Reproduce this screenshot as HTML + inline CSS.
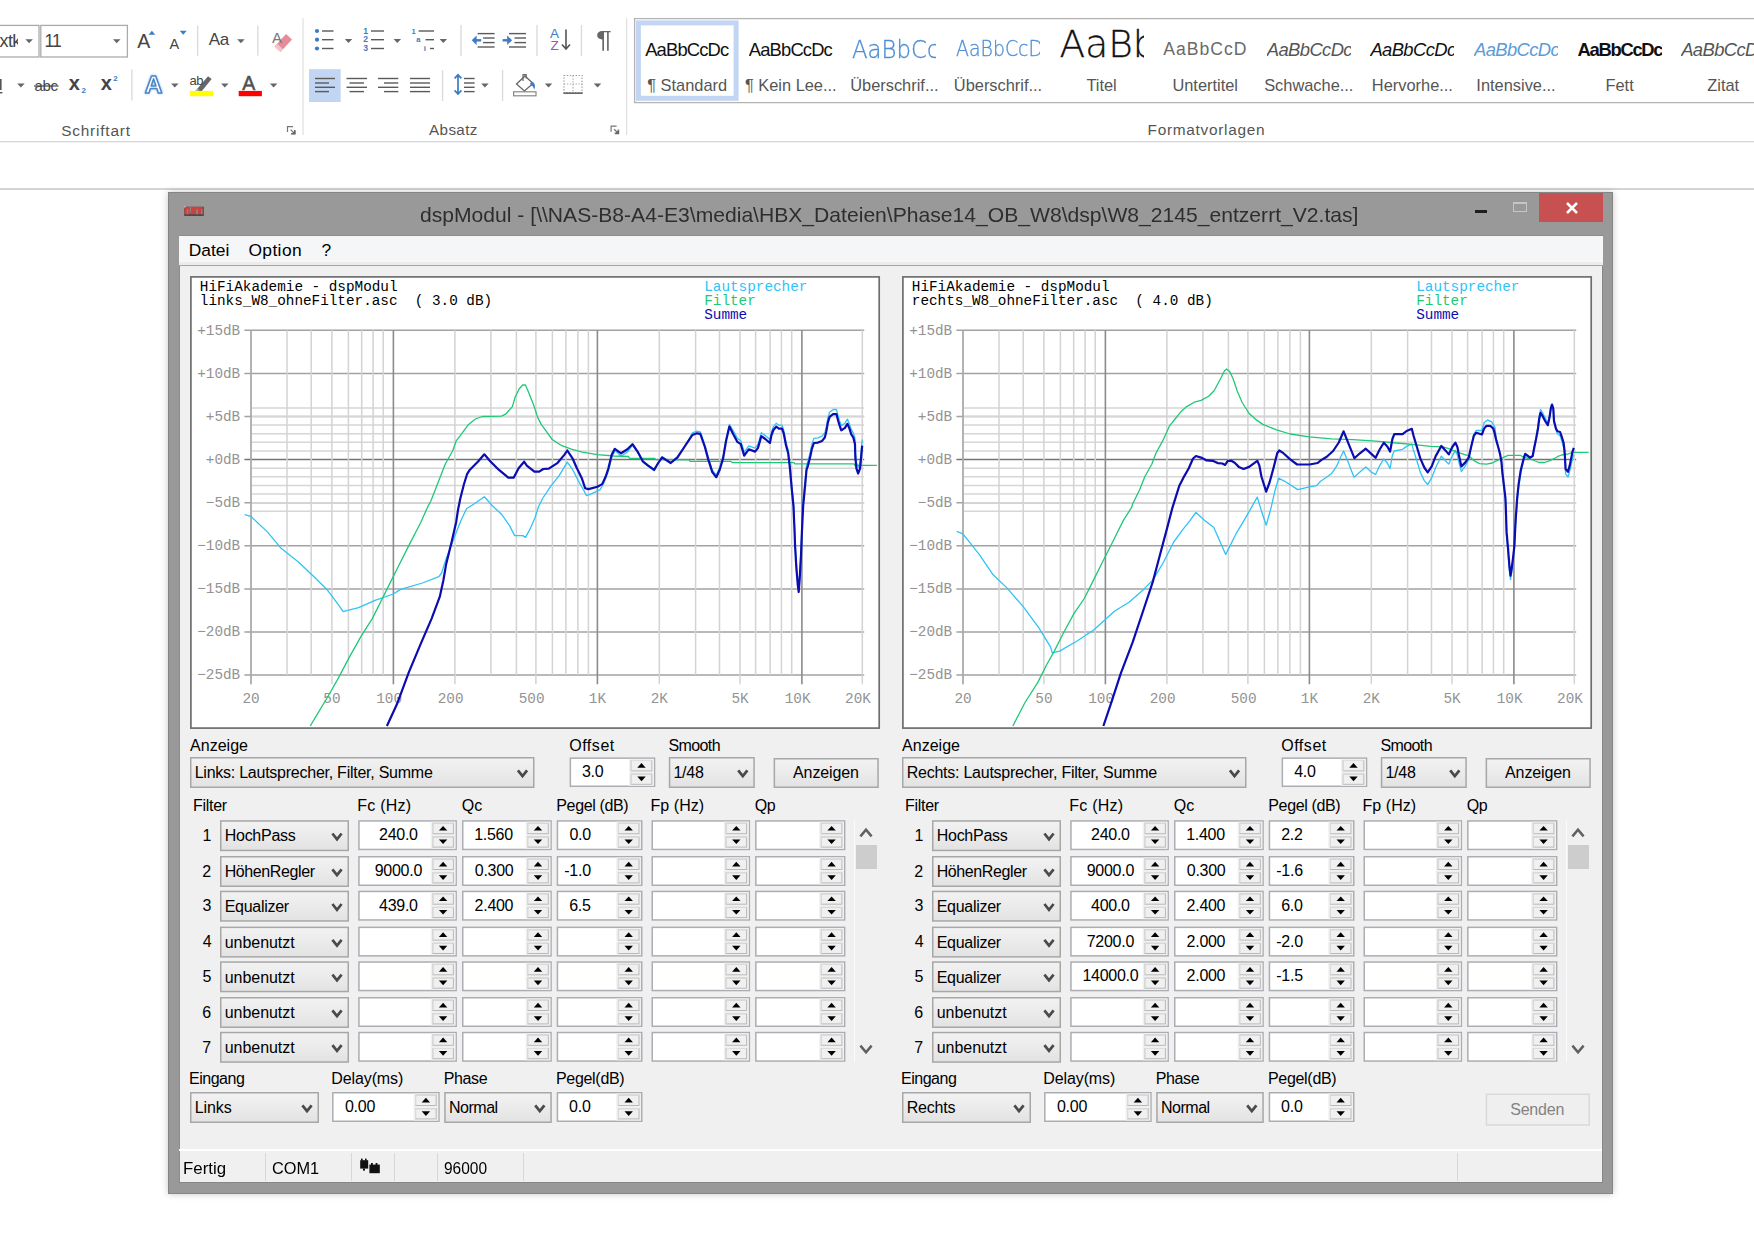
<!DOCTYPE html><html lang="de"><head><meta charset="utf-8"><title>dspModul</title><style>
html,body{margin:0;padding:0;background:#fff;}
body{width:1754px;height:1240px;overflow:hidden;position:relative;font-family:"Liberation Sans",sans-serif;}
.t{position:absolute;white-space:nowrap;line-height:1;display:block;}
</style></head><body><svg style="position:absolute;left:0;top:0" width="1754" height="150" viewBox="0 0 1754 150"><rect x="-5" y="25.4" width="44" height="31.6" fill="#fff" stroke="#ababab" stroke-width="1.3"/><rect x="40.8" y="25.4" width="86.6" height="31.6" fill="#fff" stroke="#ababab" stroke-width="1.3"/><path d="M25.4 39.2 h7.5 l-3.8 4.0 z" fill="#666"/><path d="M113.0 39.2 h7.5 l-3.8 4.0 z" fill="#666"/><path d="M148.6 34.8 h6.6 l-3.3 -4 z" fill="#3d7bc4"/><path d="M179.7 30.8 h7 l-3.5 4 z" fill="#3d7bc4"/><rect x="197.0" y="25.5" width="1.3" height="30.2" fill="#dadada"/><path d="M237.2 39.2 h7.5 l-3.8 4.0 z" fill="#666"/><rect x="257.2" y="25.5" width="1.3" height="30.2" fill="#dadada"/><path d="M274.5 46.5 l11.5 -12.5 l6 5.5 l-11.5 12.5 z" fill="#e58c9a"/><path d="M274.5 46.5 l2.6 -2.8 l6 5.5 l-2.6 2.8 z" fill="#f4c4cb"/><rect x="302.4" y="18.2" width="1.3" height="116.8" fill="#e1e1e1"/><rect x="-1" y="79" width="2.6" height="11" fill="#555"/><rect x="-1" y="92" width="3.4" height="1.4" fill="#555"/><path d="M17.2 83.6 h7.5 l-3.8 4.0 z" fill="#666"/><rect x="34.0" y="85.35" width="24.6" height="1.3" fill="#555"/><rect x="131.2" y="69.3" width="1.3" height="31.1" fill="#dadada"/><text x="153.6" y="93" text-anchor="middle" font-family="Liberation Sans, sans-serif" font-weight="bold" font-size="24.5" fill="#fff" stroke="#4a86c8" stroke-width="1.5" stroke-linejoin="round" style="filter:drop-shadow(0 0 1.2px #8db6e6)">A</text><path d="M171.1 83.6 h7.5 l-3.8 4.0 z" fill="#666"/><path d="M196.5 89.8 l11.5 -13.5 l3.6 2.6 l-10.5 13 z" fill="#666"/><path d="M195 91 l3 -2.5 l2 1.8 z" fill="#999"/><rect x="189.8" y="90.9" width="23.2" height="5.3" fill="#ffff00"/><path d="M221.1 83.6 h7.5 l-3.8 4.0 z" fill="#666"/><rect x="238.7" y="90.9" width="23.2" height="5.3" fill="#ff0000"/><path d="M269.9 83.6 h7.5 l-3.8 4.0 z" fill="#666"/><path d="M293.0 126.6 h-5.5 v5.5" fill="none" stroke="#777" stroke-width="1.2"/><path d="M290.6 129.6 l4 4 m0 -3.6 v3.6 h-3.6" fill="none" stroke="#777" stroke-width="1.3"/><path d="M295.6 134.6 h-4.6 l4.6 -4.6 z" fill="#666"/><circle cx="317" cy="31.0" r="2.1" fill="#3d7bc4"/><rect x="322.0" y="30.30" width="11.5" height="1.4" fill="#5a5a5a"/><circle cx="317" cy="39.7" r="2.1" fill="#3d7bc4"/><rect x="322.0" y="39.00" width="11.5" height="1.4" fill="#5a5a5a"/><circle cx="317" cy="48.5" r="2.1" fill="#3d7bc4"/><rect x="322.0" y="47.80" width="11.5" height="1.4" fill="#5a5a5a"/><path d="M344.8 38.9 h7.5 l-3.8 4.0 z" fill="#666"/><rect x="371.0" y="30.30" width="13.0" height="1.4" fill="#5a5a5a"/><rect x="371.0" y="39.00" width="13.0" height="1.4" fill="#5a5a5a"/><rect x="371.0" y="47.80" width="13.0" height="1.4" fill="#5a5a5a"/><path d="M393.6 38.9 h7.5 l-3.8 4.0 z" fill="#666"/><rect x="418.6" y="30.30" width="15.4" height="1.4" fill="#5a5a5a"/><rect x="425.5" y="39.00" width="8.5" height="1.4" fill="#5a5a5a"/><rect x="430.0" y="47.80" width="4.0" height="1.4" fill="#5a5a5a"/><path d="M439.6 38.9 h7.5 l-3.8 4.0 z" fill="#666"/><rect x="460.3" y="25.0" width="1.3" height="31.0" fill="#dadada"/><rect x="477.6" y="32.90" width="17.0" height="1.4" fill="#5a5a5a"/><rect x="483.1" y="37.30" width="11.5" height="1.4" fill="#5a5a5a"/><rect x="483.1" y="41.90" width="11.5" height="1.4" fill="#5a5a5a"/><rect x="477.6" y="46.30" width="17.0" height="1.4" fill="#5a5a5a"/><path d="M481.2 40.3 h-6" fill="none" stroke="#3d7bc4" stroke-width="2.4"/><path d="M476.6 35.6 l-4.9 4.7 l4.9 4.7 z" fill="#3d7bc4"/><rect x="509.0" y="32.90" width="17.0" height="1.4" fill="#5a5a5a"/><rect x="514.5" y="37.30" width="11.5" height="1.4" fill="#5a5a5a"/><rect x="514.5" y="41.90" width="11.5" height="1.4" fill="#5a5a5a"/><rect x="509.0" y="46.30" width="17.0" height="1.4" fill="#5a5a5a"/><path d="M502.6 40.3 h6" fill="none" stroke="#3d7bc4" stroke-width="2.4"/><path d="M507.2 35.6 l4.9 4.7 l-4.9 4.7 z" fill="#3d7bc4"/><rect x="536.3" y="25.0" width="1.3" height="31.0" fill="#dadada"/><path d="M566 29.5 v19.5 m-4 -4.6 l4 4.6 l4 -4.6" fill="none" stroke="#555" stroke-width="1.6"/><rect x="580.8" y="25.0" width="1.3" height="31.0" fill="#dadada"/><rect x="309" y="69.2" width="31.7" height="32.8" fill="#c2d5f2"/><rect x="315.0" y="77.80" width="20.0" height="1.4" fill="#5a5a5a"/><rect x="346.5" y="77.80" width="20.5" height="1.4" fill="#5a5a5a"/><rect x="378.0" y="77.80" width="20.3" height="1.4" fill="#5a5a5a"/><rect x="410.0" y="77.80" width="20.0" height="1.4" fill="#5a5a5a"/><rect x="315.0" y="82.30" width="14.0" height="1.4" fill="#5a5a5a"/><rect x="349.5" y="82.30" width="14.5" height="1.4" fill="#5a5a5a"/><rect x="384.0" y="82.30" width="14.3" height="1.4" fill="#5a5a5a"/><rect x="410.0" y="82.30" width="20.0" height="1.4" fill="#5a5a5a"/><rect x="315.0" y="86.60" width="20.0" height="1.4" fill="#5a5a5a"/><rect x="346.5" y="86.60" width="20.5" height="1.4" fill="#5a5a5a"/><rect x="378.0" y="86.60" width="20.3" height="1.4" fill="#5a5a5a"/><rect x="410.0" y="86.60" width="20.0" height="1.4" fill="#5a5a5a"/><rect x="315.0" y="90.90" width="14.0" height="1.4" fill="#5a5a5a"/><rect x="349.5" y="90.90" width="14.5" height="1.4" fill="#5a5a5a"/><rect x="384.0" y="90.90" width="14.3" height="1.4" fill="#5a5a5a"/><rect x="410.0" y="90.90" width="20.0" height="1.4" fill="#5a5a5a"/><rect x="441.9" y="70.0" width="1.3" height="31.0" fill="#dadada"/><path d="M458 75 v19 m-3.4 -15.6 l3.4 -3.6 l3.4 3.6 m-6.8 12 l3.4 3.6 l3.4 -3.6" fill="none" stroke="#3d7bc4" stroke-width="1.7"/><rect x="464.0" y="77.80" width="10.6" height="1.4" fill="#5a5a5a"/><rect x="464.0" y="82.30" width="10.6" height="1.4" fill="#5a5a5a"/><rect x="464.0" y="86.60" width="10.6" height="1.4" fill="#5a5a5a"/><rect x="464.0" y="90.90" width="10.6" height="1.4" fill="#5a5a5a"/><path d="M481.2 83.4 h7.5 l-3.8 4.0 z" fill="#666"/><rect x="501.9" y="70.0" width="1.3" height="31.0" fill="#dadada"/><rect x="513.6" y="91.8" width="22.4" height="4" fill="#fff" stroke="#888" stroke-width="1.2"/><path d="M516.5 84 l8.5 -8 l8 7.6 l-8.6 7.4 z" fill="#fff" stroke="#666" stroke-width="1.3"/><path d="M523 81 v-6.4 h3.2 v4" fill="none" stroke="#666" stroke-width="1.2"/><path d="M532 81.5 q4.6 2.6 2.2 8.2 q-1 -4.4 -4.4 -5.8 z" fill="#3d7bc4"/><path d="M544.8 83.4 h7.5 l-3.8 4.0 z" fill="#666"/><rect x="564" y="75.5" width="18" height="17" fill="none" stroke="#999" stroke-width="1.2" stroke-dasharray="1.3 1.6"/><path d="M573 75.5 v17 M564 84 h18" fill="none" stroke="#aaa" stroke-width="1.2" stroke-dasharray="1.3 1.6"/><rect x="563.4" y="92.40" width="19.2" height="1.6" fill="#666"/><path d="M593.8 83.4 h7.5 l-3.8 4.0 z" fill="#666"/><path d="M616.6 126.2 h-5.5 v5.5" fill="none" stroke="#777" stroke-width="1.2"/><path d="M614.2 129.2 l4 4 m0 -3.6 v3.6 h-3.6" fill="none" stroke="#777" stroke-width="1.3"/><path d="M619.2 134.2 h-4.6 l4.6 -4.6 z" fill="#666"/><rect x="626.0" y="18.2" width="1.3" height="116.8" fill="#e1e1e1"/><rect x="634.6" y="18.6" width="1130" height="84" fill="#fff" stroke="#b4b4b4" stroke-width="1.3"/><rect x="638.4" y="22.9" width="97.7" height="75.4" fill="#fff" stroke="#c2d5f2" stroke-width="5"/><rect x="0" y="141" width="1754" height="1.3" fill="#d6d6d6"/></svg><span class="t " style="left:-0.50px;top:32.16px;font-size:18.00px;color:#444;letter-spacing:-0.6px;width:18.5px;overflow:hidden;">xtk</span><span class="t " style="left:44.40px;top:33.09px;font-size:17.50px;color:#444;letter-spacing:-0.7px;">11</span><span class="t " style="left:137.20px;top:32.39px;font-size:19.50px;color:#444;">A</span><span class="t " style="left:169.50px;top:36.63px;font-size:14.50px;color:#444;">A</span><span class="t " style="left:208.80px;top:31.41px;font-size:17.00px;color:#444;letter-spacing:-0.3px;">Aa</span><span class="t " style="left:272.00px;top:29.80px;font-size:15.00px;color:#777;">A</span><span class="t " style="left:34.50px;top:77.60px;font-size:15.00px;color:#444;letter-spacing:-0.4px;">abc</span><span class="t " style="left:68.80px;top:73.47px;font-size:20.00px;color:#444;font-weight:bold;">x</span><span class="t " style="left:81.60px;top:87.43px;font-size:8.00px;color:#3d7bc4;font-weight:bold;">2</span><span class="t " style="left:100.80px;top:73.47px;font-size:20.00px;color:#444;font-weight:bold;">x</span><span class="t " style="left:113.30px;top:75.43px;font-size:8.00px;color:#3d7bc4;font-weight:bold;">2</span><span class="t " style="left:189.50px;top:73.60px;font-size:13.00px;color:#444;letter-spacing:-0.5px;">ab</span><span class="t " style="left:242.20px;top:73.79px;font-size:19.50px;color:#505050;-webkit-text-stroke:0.5px #505050;">A</span><span class="t " style="left:61.20px;top:122.56px;font-size:15.40px;color:#555;letter-spacing:0.8px;">Schriftart</span><span class="t " style="left:363.20px;top:26.62px;font-size:8.60px;color:#3d7bc4;font-weight:bold;">1</span><span class="t " style="left:363.20px;top:35.32px;font-size:8.60px;color:#3d7bc4;font-weight:bold;">2</span><span class="t " style="left:363.20px;top:44.12px;font-size:8.60px;color:#3d7bc4;font-weight:bold;">3</span><span class="t " style="left:411.40px;top:27.65px;font-size:7.50px;color:#3d7bc4;font-weight:bold;">1</span><span class="t " style="left:416.30px;top:35.65px;font-size:7.50px;color:#3d7bc4;font-weight:bold;">a</span><span class="t " style="left:423.80px;top:44.83px;font-size:8.00px;color:#3d7bc4;font-weight:bold;">i</span><span class="t " style="left:550.00px;top:26.97px;font-size:13.50px;color:#3d7bc4;">A</span><span class="t " style="left:550.40px;top:39.17px;font-size:13.50px;color:#9a57b5;">Z</span><span class="t " style="left:596.20px;top:29.33px;font-size:23.00px;color:#666;transform-origin:0 0;transform:scaleX(1.28);">¶</span><span class="t " style="left:429.00px;top:122.03px;font-size:15.20px;color:#555;letter-spacing:0.4px;">Absatz</span><span class="t" style="left:635.2px;top:77.42px;width:104px;text-align:center;font-size:16.4px;color:#555;letter-spacing:0px">¶ Standard</span><span class="t" style="left:738.8px;top:77.42px;width:104px;text-align:center;font-size:16.4px;color:#555;letter-spacing:0px">¶ Kein Lee...</span><span class="t" style="left:842.4px;top:77.42px;width:104px;text-align:center;font-size:16.4px;color:#555;letter-spacing:0px">Überschrif...</span><span class="t" style="left:946.0px;top:77.42px;width:104px;text-align:center;font-size:16.4px;color:#555;letter-spacing:0px">Überschrif...</span><span class="t" style="left:1049.6px;top:77.42px;width:104px;text-align:center;font-size:16.4px;color:#555;letter-spacing:0px">Titel</span><span class="t" style="left:1153.2px;top:77.42px;width:104px;text-align:center;font-size:16.4px;color:#555;letter-spacing:0px">Untertitel</span><span class="t" style="left:1256.8px;top:77.42px;width:104px;text-align:center;font-size:16.4px;color:#555;letter-spacing:0px">Schwache...</span><span class="t" style="left:1360.4px;top:77.42px;width:104px;text-align:center;font-size:16.4px;color:#555;letter-spacing:0px">Hervorhe...</span><span class="t" style="left:1464.0px;top:77.42px;width:104px;text-align:center;font-size:16.4px;color:#555;letter-spacing:0px">Intensive...</span><span class="t" style="left:1567.6px;top:77.42px;width:104px;text-align:center;font-size:16.4px;color:#555;letter-spacing:0px">Fett</span><span class="t" style="left:1671.2px;top:77.42px;width:104px;text-align:center;font-size:16.4px;color:#555;letter-spacing:0px">Zitat</span><span class="t" style="left:645.2px;top:40.62px;width:84.0px;height:22.1px;overflow:hidden;"><span class="t" style="left:0;top:0;font-size:18.40px;color:#111;transform-origin:0 0;transform:scaleX(1.000);letter-spacing:-0.85px;">AaBbCcDc</span></span><span class="t" style="left:748.8px;top:40.62px;width:84.0px;height:22.1px;overflow:hidden;"><span class="t" style="left:0;top:0;font-size:18.40px;color:#111;transform-origin:0 0;transform:scaleX(1.000);letter-spacing:-0.85px;">AaBbCcDc</span></span><span class="t" style="left:852.4px;top:37.88px;width:84.0px;height:28.8px;overflow:hidden;"><span class="t" style="left:0;top:0;font-size:24.00px;color:#4f8fd4;transform-origin:0 0;transform:scaleX(0.950);font-family:'DejaVu Sans Light','Liberation Sans',sans-serif;-webkit-text-stroke:0.35px #4f8fd4;">AaBbCcDc</span></span><span class="t" style="left:956.0px;top:38.62px;width:84.0px;height:25.2px;overflow:hidden;"><span class="t" style="left:0;top:0;font-size:21.00px;color:#4f8fd4;transform-origin:0 0;transform:scaleX(0.900);font-family:'DejaVu Sans Light','Liberation Sans',sans-serif;-webkit-text-stroke:0.3px #4f8fd4;">AaBbCcDd</span></span><span class="t" style="left:1059.6px;top:26.46px;width:84.0px;height:45.0px;overflow:hidden;"><span class="t" style="left:0;top:0;font-size:37.50px;color:#111;transform-origin:0 0;transform:scaleX(1.000);font-family:'DejaVu Sans Light','Liberation Sans',sans-serif;-webkit-text-stroke:0.3px #111;">AaBb</span></span><span class="t" style="left:1163.2px;top:41.30px;width:84.0px;height:21.1px;overflow:hidden;"><span class="t" style="left:0;top:0;font-size:17.60px;color:#6a6a6a;transform-origin:0 0;transform:scaleX(1.000);letter-spacing:1.0px;">AaBbCcDd</span></span><span class="t" style="left:1266.8px;top:40.62px;width:84.0px;height:22.1px;overflow:hidden;"><span class="t" style="left:0;top:0;font-size:18.40px;color:#555;transform-origin:0 0;transform:scaleX(1.000);font-style:italic;letter-spacing:-0.6px;">AaBbCcDc</span></span><span class="t" style="left:1370.4px;top:40.62px;width:84.0px;height:22.1px;overflow:hidden;"><span class="t" style="left:0;top:0;font-size:18.40px;color:#111;transform-origin:0 0;transform:scaleX(1.000);font-style:italic;letter-spacing:-0.6px;">AaBbCcDc</span></span><span class="t" style="left:1474.0px;top:40.62px;width:84.0px;height:22.1px;overflow:hidden;"><span class="t" style="left:0;top:0;font-size:18.40px;color:#5b9bd8;transform-origin:0 0;transform:scaleX(1.000);font-style:italic;letter-spacing:-0.6px;">AaBbCcDc</span></span><span class="t" style="left:1577.6px;top:40.62px;width:84.0px;height:22.1px;overflow:hidden;"><span class="t" style="left:0;top:0;font-size:18.40px;color:#111;transform-origin:0 0;transform:scaleX(1.000);font-weight:bold;letter-spacing:-1.3px;">AaBbCcDc</span></span><span class="t" style="left:1681.2px;top:40.62px;width:84.0px;height:22.1px;overflow:hidden;"><span class="t" style="left:0;top:0;font-size:18.40px;color:#555;transform-origin:0 0;transform:scaleX(1.000);font-style:italic;letter-spacing:-0.6px;">AaBbCcDc</span></span><span class="t " style="left:1147.60px;top:122.16px;font-size:15.40px;color:#555;letter-spacing:0.7px;">Formatvorlagen</span><div class="" style="position:absolute;left:0.00px;top:188.40px;width:1754.00px;height:1.30px;background:#d4d4d4;"></div><div class="" style="position:absolute;left:168.00px;top:191.60px;width:1445.00px;height:1002.00px;box-sizing:border-box;background:#999;border:1.4px solid #858585;box-shadow:0 0 7px rgba(0,0,0,0.22);"></div><svg style="position:absolute;left:182px;top:204px" width="24" height="14" viewBox="182 204 24 14"><rect x="184.2" y="206.8" width="19.6" height="9.2" fill="#4a4a4a"/><rect x="184.4" y="206.8" width="18.2" height="7.4" fill="#c84242"/><rect x="186.9" y="209.2" width="1.3" height="5" fill="#8e8686"/><rect x="189.8" y="206.8" width="1.2" height="5.6" fill="#948080"/><rect x="196.2" y="209.2" width="1.8" height="5" fill="#7f8686"/><rect x="201.2" y="209.2" width="1.3" height="5" fill="#8e8686"/><rect x="184" y="206" width="1.4" height="1.4" fill="#c9c9c9"/></svg><span class="t" id="title" style="left:420px;top:204.53px;font-size:20.4px;color:#2e2e2e;transform-origin:0 0;transform:scaleX(1.035)">dspModul - [\\NAS-B8-A4-E3\media\HBX_Dateien\Phase14_OB_W8\dsp\W8_2145_entzerrt_V2.tas]</span><div class="" style="position:absolute;left:1475.20px;top:209.70px;width:12.20px;height:3.00px;background:#1e1e1e;"></div><div class="" style="position:absolute;left:1512.80px;top:202.30px;width:14.20px;height:10.20px;box-sizing:border-box;border:1.3px solid #c6c6c6;border-top-width:2.6px;"></div><div class="" style="position:absolute;left:1538.70px;top:193.00px;width:64.70px;height:28.60px;background:#c75050;"></div><svg style="position:absolute;left:1564.8px;top:201px" width="14" height="14" viewBox="0 0 14 14"><path d="M2 2 L12 12 M12 2 L2 12" stroke="#fff" stroke-width="2.5" fill="none"/></svg><div class="" style="position:absolute;left:179.40px;top:236.00px;width:1423.20px;height:946.20px;background:#f0f0f0;"></div><div class="" style="position:absolute;left:178.60px;top:235.20px;width:1424.80px;height:1.00px;background:#8c8c8c;"></div><div class="" style="position:absolute;left:178.60px;top:235.20px;width:1.00px;height:947.00px;background:#8c8c8c;"></div><div class="" style="position:absolute;left:1602.30px;top:235.20px;width:1.00px;height:947.00px;background:#878787;"></div><div class="" style="position:absolute;left:178.60px;top:1182.00px;width:1424.80px;height:1.00px;background:#878787;"></div><div class="" style="position:absolute;left:179.40px;top:236.20px;width:1423.20px;height:27.40px;background:#f5f6f7;"></div><div class="" style="position:absolute;left:179.40px;top:262.20px;width:1423.20px;height:2.80px;background:#ececec;"></div><div class="" style="position:absolute;left:179.40px;top:264.90px;width:1423.20px;height:1.20px;background:#a6a6a6;"></div><span class="t " style="left:188.80px;top:242.47px;font-size:17.40px;color:#000;letter-spacing:0px;">Datei</span><span class="t " style="left:248.40px;top:242.47px;font-size:17.40px;color:#000;letter-spacing:0.4px;">Option</span><span class="t " style="left:321.60px;top:242.47px;font-size:17.40px;color:#000;">?</span><svg style="position:absolute;left:0;top:0" width="1754" height="1240" viewBox="0 0 1754 1240"><defs><linearGradient id="cg" x1="0" y1="0" x2="0" y2="1"><stop offset="0" stop-color="#f2f2f2"/><stop offset="0.5" stop-color="#ebebeb"/><stop offset="1" stop-color="#e2e2e2"/></linearGradient></defs><rect x="190.90" y="276.9" width="688.3" height="451.2" fill="#fff" stroke="#6e6e6e" stroke-width="1.7"/><path d="M244.40 675.10 H864.20 M244.40 632.00 H864.20 M244.40 588.90 H864.20 M244.40 545.80 H864.20 M244.40 502.70 H864.20 M244.40 416.50 H864.20 M244.40 373.40 H864.20 M244.40 330.30 H864.20" stroke="#a2a2a2" stroke-width="1.5" fill="none"/><path d="M251.60 511.32 H864.00 M251.60 502.70 H864.00 M251.60 494.08 H864.00 M251.60 485.46 H864.00 M251.60 476.84 H864.00 M251.60 468.22 H864.00 M251.60 450.98 H864.00 M251.60 442.36 H864.00 M251.60 433.74 H864.00 M251.60 425.12 H864.00 M251.60 416.50 H864.00 M251.60 407.88 H864.00" stroke="#d6d6d6" stroke-width="1.5" fill="none"/><path d="M244.40 459.60 H864.20" stroke="#757575" stroke-width="1.5" fill="none"/><path d="M287.00 330.30 V675.10 M311.20 330.30 V675.10 M331.90 330.30 V684.30 M348.40 330.30 V675.10 M361.70 330.30 V675.10 M373.10 330.30 V675.10 M383.20 330.30 V675.10 M454.90 330.30 V684.30 M490.90 330.30 V675.10 M516.40 330.30 V675.10 M535.90 330.30 V684.30 M552.40 330.30 V675.10 M565.90 330.30 V675.10 M577.90 330.30 V675.10 M588.40 330.30 V675.10 M659.30 330.30 V684.30 M695.60 330.30 V675.10 M719.50 330.30 V675.10 M740.00 330.30 V684.30 M755.60 330.30 V675.10 M770.10 330.30 V675.10 M781.40 330.30 V675.10 M791.70 330.30 V675.10 M862.30 330.30 V684.30" stroke="#d3d3d3" stroke-width="1.5" fill="none"/><path d="M251.00 330.30 V684.30" stroke="#ababab" stroke-width="1.8" fill="none"/><path d="M393.40 330.30 V684.30 M597.40 330.30 V684.30 M801.90 330.30 V684.30" stroke="#8c8c8c" stroke-width="1.6" fill="none"/><g font-family='"Liberation Mono", monospace' font-size="14.33"><text x="240.20" y="679.30" text-anchor="end" fill="#939393">−25dB</text><text x="240.20" y="636.20" text-anchor="end" fill="#939393">−20dB</text><text x="240.20" y="593.10" text-anchor="end" fill="#939393">−15dB</text><text x="240.20" y="550.00" text-anchor="end" fill="#939393">−10dB</text><text x="240.20" y="506.90" text-anchor="end" fill="#939393">−5dB</text><text x="240.20" y="463.80" text-anchor="end" fill="#939393">+0dB</text><text x="240.20" y="420.70" text-anchor="end" fill="#939393">+5dB</text><text x="240.20" y="377.60" text-anchor="end" fill="#939393">+10dB</text><text x="240.20" y="334.50" text-anchor="end" fill="#939393">+15dB</text><text x="259.60" y="703.30" text-anchor="end" fill="#939393">20</text><text x="340.50" y="703.30" text-anchor="end" fill="#939393">50</text><text x="402.00" y="703.30" text-anchor="end" fill="#939393">100</text><text x="463.50" y="703.30" text-anchor="end" fill="#939393">200</text><text x="544.50" y="703.30" text-anchor="end" fill="#939393">500</text><text x="606.00" y="703.30" text-anchor="end" fill="#939393">1K</text><text x="667.90" y="703.30" text-anchor="end" fill="#939393">2K</text><text x="748.60" y="703.30" text-anchor="end" fill="#939393">5K</text><text x="810.50" y="703.30" text-anchor="end" fill="#939393">10K</text><text x="870.90" y="703.30" text-anchor="end" fill="#939393">20K</text><text x="199.80" y="290.5" fill="#000">HiFiAkademie - dspModul</text><text x="199.80" y="305" fill="#000" xml:space="preserve">links_W8_ohneFilter.asc  ( 3.0 dB)</text><text x="704.20" y="290.8" fill="#2fc3f7">Lautsprecher</text><text x="704.20" y="305" fill="#1fc877">Filter</text><text x="704.20" y="319.3" fill="#0c0cb0">Summe</text></g><clipPath id="clipL"><rect x="191.8" y="278" width="686.4" height="449.4"/></clipPath><path d="M244.6 514.6 L250.9 516.4 L267.4 531.9 L281.1 548.3 L298.4 562.0 L314.8 577.5 L327.6 590.3 L338.5 604.9 L343.1 611.7 L347.6 610.4 L358.6 607.6 L375.0 600.3 L393.3 594.0 L400.6 589.4 L422.4 583.0 L438.9 576.6 L441.6 573.0 L446.2 558.4 L452.6 542.0 L458.9 525.5 L461.7 519.0 L466.5 508.8 L474.0 504.0 L484.3 496.7 L491.9 505.3 L501.5 514.2 L509.7 525.9 L514.6 535.6 L522.8 535.6 L525.5 537.4 L529.6 529.9 L535.0 517.7 L538.5 506.7 L542.6 498.5 L550.8 486.1 L559.0 475.8 L567.3 462.1 L572.7 469.7 L578.2 480.6 L583.7 490.2 L586.5 495.7 L591.9 493.7 L600.2 489.6 L604.3 482.0 L608.4 471.1 L611.8 457.3 L615.2 450.6 L621.1 456.3 L627.4 452.0 L632.5 445.1 L637.6 452.5 L642.8 462.1 L647.9 466.1 L654.2 470.6 L658.2 462.5 L662.1 456.8 L670.7 462.5 L677.5 456.7 L684.4 446.4 L688.9 439.6 L692.4 432.9 L696.9 431.2 L700.3 431.8 L704.9 444.9 L708.3 457.5 L712.3 470.0 L716.3 475.1 L719.7 467.7 L723.1 456.3 L726.0 439.2 L729.4 424.4 L733.4 431.0 L737.4 438.4 L740.8 440.7 L744.2 452.1 L748.8 445.8 L755.1 448.1 L757.9 444.6 L761.3 432.7 L765.3 435.6 L769.9 439.6 L771.4 432.0 L773.4 426.6 L776.2 423.3 L778.9 425.2 L782.0 425.2 L783.7 430.0 L786.1 442.3 L788.2 449.9 L789.9 464.5 L791.6 483.9 L793.5 503.2 L794.6 528.0 L795.1 541.9 L796.4 563.8 L797.7 579.3 L798.7 587.3 L799.7 574.2 L801.0 550.9 L801.9 527.7 L803.2 500.6 L805.2 480.0 L806.5 465.3 L808.0 460.9 L810.4 451.3 L811.8 444.4 L813.9 438.3 L818.0 437.9 L822.1 436.2 L824.8 432.8 L826.2 427.3 L827.9 417.7 L829.6 412.2 L833.1 409.5 L836.5 409.5 L838.2 416.3 L839.9 421.8 L841.3 425.6 L845.0 423.2 L847.4 419.1 L849.5 423.9 L851.2 429.4 L853.3 432.8 L855.0 438.2 L855.3 450.6 L856.4 462.2 L858.1 467.4 L860.1 462.2 L861.2 450.6 L862.2 439.6" fill="none" stroke="#2fc3f7" stroke-width="1.3" stroke-linejoin="round" clip-path="url(#clipL)"/><path d="M310.2 726.0 L316.6 715.3 L327.6 697.0 L338.5 677.9 L349.5 656.9 L361.3 635.9 L372.3 618.6 L380.5 602.2 L389.6 583.9 L397.8 567.5 L408.8 545.6 L420.6 522.8 L427.9 506.4 L430.8 501.2 L437.7 483.4 L445.2 464.2 L452.8 450.5 L456.2 440.9 L461.0 434.7 L468.6 424.4 L475.4 419.0 L482.3 416.5 L501.5 416.2 L505.6 414.2 L512.4 406.6 L515.2 397.0 L519.3 388.8 L522.7 385.0 L525.4 385.0 L528.9 392.9 L533.7 405.2 L537.8 417.6 L541.2 424.4 L545.3 429.9 L552.2 439.5 L561.8 445.7 L571.4 449.1 L582.3 452.1 L597.4 454.6 L613.9 456.0 L628.5 456.5 L629.6 458.3 L654.7 458.4 L655.8 459.7 L689.0 459.8 L690.1 461.3 L731.0 461.3 L732.2 462.7 L794.0 462.6 L794.8 463.9 L854.0 463.9 L854.7 465.3 L876.9 465.3" fill="none" stroke="#1fc877" stroke-width="1.3" stroke-linejoin="round" clip-path="url(#clipL)"/><path d="M386.9 726.0 L396.9 704.3 L408.8 672.4 L420.6 644.1 L431.6 618.6 L439.8 596.7 L443.4 580.3 L446.2 563.9 L451.6 542.0 L456.2 521.9 L458.0 510.0 L460.3 498.5 L463.8 484.8 L467.2 473.8 L469.9 469.7 L478.1 461.5 L484.3 454.3 L490.5 461.5 L498.7 469.7 L508.3 477.6 L513.8 477.6 L518.6 468.3 L524.1 461.7 L526.8 465.6 L534.4 471.7 L539.2 471.7 L543.3 469.0 L548.8 468.7 L557.7 462.8 L564.5 454.6 L567.3 450.5 L572.7 458.7 L576.9 468.3 L581.7 477.9 L585.1 488.2 L588.5 489.1 L597.4 486.8 L602.2 484.1 L605.7 476.5 L608.4 468.3 L611.8 454.6 L614.8 448.8 L621.1 453.3 L627.4 449.3 L632.5 444.2 L637.6 451.6 L642.8 461.3 L647.9 465.3 L654.2 469.8 L658.2 463.0 L662.1 457.3 L670.7 463.0 L677.5 457.3 L684.4 447.0 L688.9 440.2 L692.4 435.0 L696.9 433.3 L700.3 433.9 L704.9 447.0 L708.3 459.6 L712.3 472.1 L716.3 477.2 L719.7 469.8 L723.1 458.4 L726.0 441.3 L729.4 426.5 L733.4 434.5 L737.4 441.9 L740.8 444.2 L744.2 455.6 L748.8 449.3 L755.1 451.6 L757.9 448.1 L761.3 436.2 L765.3 439.0 L769.9 443.0 L771.4 435.4 L773.4 430.0 L776.2 426.7 L778.9 428.6 L782.0 428.6 L783.7 433.4 L786.1 445.7 L788.2 453.3 L789.9 467.9 L791.6 487.3 L793.5 506.6 L794.6 532.4 L795.1 546.6 L796.4 568.5 L797.7 584.0 L798.7 592.0 L799.7 578.9 L801.0 555.6 L801.9 532.4 L803.2 505.3 L805.2 484.7 L806.5 470.0 L808.0 465.6 L810.4 456.0 L811.8 449.1 L813.9 443.0 L818.0 442.6 L822.1 440.9 L824.8 437.5 L826.2 432.0 L827.9 422.4 L829.6 416.9 L833.1 414.2 L836.5 414.2 L838.2 421.0 L839.9 426.5 L841.3 430.3 L845.0 427.9 L847.4 423.8 L849.5 428.6 L851.2 434.1 L853.3 437.5 L855.0 444.3 L855.3 456.7 L856.4 468.3 L858.1 473.5 L860.1 468.3 L861.2 456.7 L862.2 445.7" fill="none" stroke="#0c0cb0" stroke-width="2.2" stroke-linejoin="round" clip-path="url(#clipL)"/><rect x="902.90" y="276.9" width="688.3" height="451.2" fill="#fff" stroke="#6e6e6e" stroke-width="1.7"/><path d="M956.40 675.10 H1576.20 M956.40 632.00 H1576.20 M956.40 588.90 H1576.20 M956.40 545.80 H1576.20 M956.40 502.70 H1576.20 M956.40 416.50 H1576.20 M956.40 373.40 H1576.20 M956.40 330.30 H1576.20" stroke="#a2a2a2" stroke-width="1.5" fill="none"/><path d="M963.60 511.32 H1576.00 M963.60 502.70 H1576.00 M963.60 494.08 H1576.00 M963.60 485.46 H1576.00 M963.60 476.84 H1576.00 M963.60 468.22 H1576.00 M963.60 450.98 H1576.00 M963.60 442.36 H1576.00 M963.60 433.74 H1576.00 M963.60 425.12 H1576.00 M963.60 416.50 H1576.00 M963.60 407.88 H1576.00" stroke="#d6d6d6" stroke-width="1.5" fill="none"/><path d="M956.40 459.60 H1576.20" stroke="#757575" stroke-width="1.5" fill="none"/><path d="M999.00 330.30 V675.10 M1023.20 330.30 V675.10 M1043.90 330.30 V684.30 M1060.40 330.30 V675.10 M1073.70 330.30 V675.10 M1085.10 330.30 V675.10 M1095.20 330.30 V675.10 M1166.90 330.30 V684.30 M1202.90 330.30 V675.10 M1228.40 330.30 V675.10 M1247.90 330.30 V684.30 M1264.40 330.30 V675.10 M1277.90 330.30 V675.10 M1289.90 330.30 V675.10 M1300.40 330.30 V675.10 M1371.30 330.30 V684.30 M1407.60 330.30 V675.10 M1431.50 330.30 V675.10 M1452.00 330.30 V684.30 M1467.60 330.30 V675.10 M1482.10 330.30 V675.10 M1493.40 330.30 V675.10 M1503.70 330.30 V675.10 M1574.30 330.30 V684.30" stroke="#d3d3d3" stroke-width="1.5" fill="none"/><path d="M963.00 330.30 V684.30" stroke="#ababab" stroke-width="1.8" fill="none"/><path d="M1105.40 330.30 V684.30 M1309.40 330.30 V684.30 M1513.90 330.30 V684.30" stroke="#8c8c8c" stroke-width="1.6" fill="none"/><g font-family='"Liberation Mono", monospace' font-size="14.33"><text x="952.20" y="679.30" text-anchor="end" fill="#939393">−25dB</text><text x="952.20" y="636.20" text-anchor="end" fill="#939393">−20dB</text><text x="952.20" y="593.10" text-anchor="end" fill="#939393">−15dB</text><text x="952.20" y="550.00" text-anchor="end" fill="#939393">−10dB</text><text x="952.20" y="506.90" text-anchor="end" fill="#939393">−5dB</text><text x="952.20" y="463.80" text-anchor="end" fill="#939393">+0dB</text><text x="952.20" y="420.70" text-anchor="end" fill="#939393">+5dB</text><text x="952.20" y="377.60" text-anchor="end" fill="#939393">+10dB</text><text x="952.20" y="334.50" text-anchor="end" fill="#939393">+15dB</text><text x="971.60" y="703.30" text-anchor="end" fill="#939393">20</text><text x="1052.50" y="703.30" text-anchor="end" fill="#939393">50</text><text x="1114.00" y="703.30" text-anchor="end" fill="#939393">100</text><text x="1175.50" y="703.30" text-anchor="end" fill="#939393">200</text><text x="1256.50" y="703.30" text-anchor="end" fill="#939393">500</text><text x="1318.00" y="703.30" text-anchor="end" fill="#939393">1K</text><text x="1379.90" y="703.30" text-anchor="end" fill="#939393">2K</text><text x="1460.60" y="703.30" text-anchor="end" fill="#939393">5K</text><text x="1522.50" y="703.30" text-anchor="end" fill="#939393">10K</text><text x="1582.90" y="703.30" text-anchor="end" fill="#939393">20K</text><text x="911.80" y="290.5" fill="#000">HiFiAkademie - dspModul</text><text x="911.80" y="305" fill="#000" xml:space="preserve">rechts_W8_ohneFilter.asc  ( 4.0 dB)</text><text x="1416.20" y="290.8" fill="#2fc3f7">Lautsprecher</text><text x="1416.20" y="305" fill="#1fc877">Filter</text><text x="1416.20" y="319.3" fill="#0c0cb0">Summe</text></g><clipPath id="clipR"><rect x="903.8" y="278" width="686.4" height="449.4"/></clipPath><path d="M956.6 531.4 L962.9 533.8 L979.4 554.7 L993.1 574.8 L1006.7 587.6 L1023.2 606.7 L1038.7 627.7 L1050.5 646.9 L1052.3 652.9 L1059.6 651.1 L1077.9 640.5 L1094.3 629.5 L1105.3 619.5 L1114.4 611.3 L1129.0 602.2 L1143.6 589.4 L1152.7 580.3 L1163.6 562.0 L1173.7 542.0 L1182.6 529.9 L1190.1 520.4 L1195.9 512.5 L1203.9 519.7 L1213.8 527.4 L1225.7 554.4 L1236.6 532.8 L1246.4 516.3 L1257.3 497.1 L1261.4 510.8 L1266.2 525.2 L1271.0 508.1 L1275.1 490.2 L1278.6 478.2 L1284.7 481.3 L1297.8 489.6 L1309.4 486.8 L1316.6 485.6 L1320.6 481.2 L1325.7 477.8 L1331.4 473.8 L1336.5 466.4 L1340.5 457.3 L1343.6 451.0 L1348.5 463.0 L1354.0 477.2 L1359.9 472.1 L1365.8 467.0 L1371.3 472.1 L1375.6 474.4 L1379.8 465.3 L1383.8 459.0 L1387.3 463.0 L1390.1 468.7 L1392.4 455.0 L1394.3 451.0 L1402.6 449.3 L1406.6 446.4 L1411.8 444.2 L1413.5 450.4 L1416.9 460.7 L1420.3 472.1 L1424.3 480.6 L1427.7 484.6 L1431.7 477.8 L1435.7 467.5 L1441.4 456.1 L1445.4 460.7 L1448.8 464.1 L1452.3 456.1 L1455.4 450.4 L1457.4 455.0 L1459.1 463.0 L1461.4 471.5 L1465.4 465.8 L1468.8 459.6 L1471.1 447.0 L1473.9 433.9 L1476.2 430.5 L1481.9 430.5 L1484.2 422.5 L1487.6 419.9 L1491.6 421.9 L1495.0 427.6 L1496.1 437.8 L1498.4 447.1 L1500.2 454.8 L1501.5 463.1 L1502.3 473.1 L1504.0 488.1 L1505.5 501.7 L1506.6 535.7 L1508.1 553.1 L1509.4 569.9 L1510.5 579.5 L1511.7 572.4 L1513.0 562.1 L1514.3 550.5 L1515.6 524.7 L1517.2 501.5 L1518.7 487.3 L1520.7 474.1 L1522.4 466.1 L1524.2 458.6 L1525.2 455.5 L1527.2 456.2 L1530.0 457.7 L1532.7 455.2 L1534.1 447.2 L1536.1 436.8 L1537.9 426.4 L1539.2 415.7 L1540.6 409.5 L1542.3 412.3 L1545.1 417.9 L1547.8 423.1 L1549.5 416.1 L1550.9 407.1 L1552.0 404.2 L1553.3 408.9 L1554.0 421.5 L1556.0 430.3 L1557.4 433.8 L1560.1 435.6 L1561.8 441.0 L1563.6 447.5 L1564.6 455.9 L1565.3 468.3 L1565.6 473.9 L1568.0 477.0 L1569.7 471.4 L1571.1 465.0 L1572.5 458.7 L1573.8 454.6" fill="none" stroke="#2fc3f7" stroke-width="1.3" stroke-linejoin="round" clip-path="url(#clipR)"/><path d="M1012.8 726.0 L1025.0 702.5 L1037.8 682.4 L1046.9 664.2 L1054.2 651.4 L1063.3 633.2 L1074.2 613.1 L1084.3 598.5 L1092.5 582.1 L1103.4 560.2 L1112.6 542.0 L1123.5 520.1 L1131.7 507.3 L1132.6 504.0 L1139.4 490.2 L1144.9 476.5 L1151.8 464.2 L1155.9 453.2 L1162.7 440.9 L1169.6 425.8 L1175.1 419.0 L1180.6 412.1 L1186.7 406.6 L1194.3 402.2 L1201.1 400.4 L1208.7 396.3 L1214.1 390.8 L1220.3 379.2 L1224.4 371.0 L1226.5 368.9 L1229.9 371.7 L1233.3 379.2 L1237.4 391.5 L1242.2 402.5 L1249.1 413.5 L1256.0 419.6 L1262.8 424.4 L1276.5 429.9 L1290.2 434.0 L1309.4 436.8 L1331.4 438.8 L1353.0 439.6 L1375.9 441.1 L1396.4 443.0 L1414.6 444.7 L1430.6 446.4 L1443.1 446.8 L1448.8 448.7 L1455.7 451.6 L1462.5 453.9 L1469.4 456.1 L1473.9 460.7 L1479.6 463.6 L1486.5 464.1 L1492.2 463.0 L1497.9 460.1 L1503.6 457.3 L1508.0 455.3 L1520.4 455.3 L1523.1 457.0 L1528.6 458.7 L1534.1 460.5 L1538.9 462.5 L1544.4 462.5 L1549.2 460.8 L1554.0 458.7 L1557.4 456.7 L1561.5 455.0 L1568.4 453.9 L1572.5 452.4 L1588.6 452.4" fill="none" stroke="#1fc877" stroke-width="1.3" stroke-linejoin="round" clip-path="url(#clipR)"/><path d="M1103.4 726.0 L1110.7 704.3 L1120.8 673.3 L1132.6 642.3 L1143.6 609.5 L1152.7 582.1 L1160.0 554.7 L1167.3 527.4 L1172.3 508.1 L1179.2 486.1 L1183.3 477.9 L1188.8 468.3 L1192.9 458.7 L1195.9 456.0 L1201.1 457.6 L1206.6 460.4 L1212.8 460.8 L1217.6 463.1 L1222.4 463.5 L1225.1 464.9 L1227.8 460.8 L1231.3 460.8 L1234.7 462.8 L1238.8 466.9 L1243.6 469.0 L1249.1 466.9 L1257.3 460.8 L1259.4 465.6 L1261.4 476.5 L1266.2 491.6 L1269.7 482.0 L1273.8 466.9 L1277.2 453.2 L1279.3 450.5 L1283.4 453.2 L1290.2 459.4 L1297.1 464.5 L1309.4 464.5 L1317.7 463.0 L1321.1 460.1 L1326.8 456.7 L1333.1 451.0 L1338.8 442.5 L1343.6 431.3 L1348.5 443.6 L1354.4 458.2 L1359.9 453.3 L1365.8 448.7 L1371.3 453.9 L1375.6 457.8 L1379.8 449.3 L1383.8 442.7 L1387.3 446.4 L1390.1 451.6 L1392.4 439.0 L1394.3 434.2 L1402.6 434.2 L1406.6 431.0 L1411.8 428.8 L1413.5 435.6 L1416.9 447.0 L1420.3 458.4 L1424.3 467.5 L1427.7 472.3 L1431.7 466.4 L1435.7 456.1 L1441.4 445.9 L1445.4 450.4 L1448.8 454.4 L1452.3 447.0 L1455.4 442.7 L1457.4 447.0 L1459.1 456.1 L1461.4 466.4 L1465.4 462.4 L1468.8 457.3 L1471.1 447.0 L1473.9 435.6 L1476.2 432.8 L1481.9 434.5 L1484.1 428.6 L1486.5 425.8 L1490.2 425.8 L1493.3 428.6 L1494.7 433.4 L1496.1 439.6 L1498.4 447.8 L1500.2 454.6 L1501.5 462.2 L1502.3 471.8 L1504.0 486.0 L1505.5 498.9 L1506.6 532.4 L1508.1 549.2 L1509.4 566.0 L1510.5 575.6 L1511.7 568.5 L1513.0 558.2 L1514.3 546.6 L1515.6 520.8 L1517.2 497.6 L1518.7 483.4 L1520.7 470.4 L1522.4 463.5 L1524.2 456.7 L1525.2 453.9 L1527.2 455.3 L1530.0 457.7 L1532.7 456.0 L1534.1 448.5 L1536.1 438.9 L1537.9 429.3 L1539.2 419.0 L1540.6 412.8 L1542.3 415.6 L1545.1 421.0 L1547.8 425.2 L1549.5 417.6 L1550.9 408.0 L1552.0 404.6 L1553.3 408.7 L1554.0 421.0 L1556.0 428.6 L1557.4 431.3 L1560.1 432.0 L1561.8 436.8 L1563.6 443.0 L1564.6 451.2 L1565.3 463.5 L1565.6 469.0 L1568.0 471.8 L1569.7 465.6 L1571.1 458.7 L1572.5 451.9 L1573.8 447.8" fill="none" stroke="#0c0cb0" stroke-width="2.2" stroke-linejoin="round" clip-path="url(#clipR)"/><rect x="190.75" y="757.75" width="343.00" height="29.50" fill="url(#cg)" stroke="#a7a7a7" stroke-width="1.5"/><path d="M517.90 770.30 l4.6 5.8 l4.6 -5.8" fill="none" stroke="#4a4a4a" stroke-width="2.7"/><rect x="570.35" y="758.15" width="84.20" height="28.10" fill="#fff" stroke="#abadb3" stroke-width="1.5"/><g transform="translate(629.10 757.40)"><rect x="0" y="1.5" width="24.7" height="27" fill="#f0f0f0"/><rect x="2.1" y="3.1" width="20.6" height="10.4" fill="#f0f0f0" stroke="#b9b9b9"/><path d="M2.1 13.5V3.1H22.7" fill="none" stroke="#dedede"/><rect x="2.1" y="16.7" width="20.6" height="10.2" fill="#f0f0f0" stroke="#b9b9b9"/><path d="M2.1 26.9V16.7H22.7" fill="none" stroke="#dedede"/><path d="M8.2 10.4h8.4l-4.2-4.7z"/><path d="M8.2 19.2h8.4l-4.2 4.7z"/></g><rect x="669.55" y="757.75" width="84.50" height="29.50" fill="url(#cg)" stroke="#a7a7a7" stroke-width="1.5"/><path d="M738.20 770.30 l4.6 5.8 l4.6 -5.8" fill="none" stroke="#4a4a4a" stroke-width="2.7"/><rect x="774.35" y="758.75" width="103.70" height="28.50" fill="url(#cg)" stroke="#a7a7a7" stroke-width="1.5"/><rect x="220.75" y="820.95" width="127.50" height="29.50" fill="url(#cg)" stroke="#a7a7a7" stroke-width="1.5"/><path d="M332.40 833.50 l4.6 5.8 l4.6 -5.8" fill="none" stroke="#4a4a4a" stroke-width="2.7"/><rect x="358.95" y="820.95" width="97.20" height="28.50" fill="#fff" stroke="#abadb3" stroke-width="1.5"/><g transform="translate(430.70 820.20)"><rect x="0" y="1.5" width="24.7" height="27" fill="#f0f0f0"/><rect x="2.1" y="3.1" width="20.6" height="10.4" fill="#f0f0f0" stroke="#b9b9b9"/><path d="M2.1 13.5V3.1H22.7" fill="none" stroke="#dedede"/><rect x="2.1" y="16.7" width="20.6" height="10.2" fill="#f0f0f0" stroke="#b9b9b9"/><path d="M2.1 26.9V16.7H22.7" fill="none" stroke="#dedede"/><path d="M8.2 10.4h8.4l-4.2-4.7z"/><path d="M8.2 19.2h8.4l-4.2 4.7z"/></g><rect x="462.75" y="820.95" width="88.30" height="28.50" fill="#fff" stroke="#abadb3" stroke-width="1.5"/><g transform="translate(525.60 820.20)"><rect x="0" y="1.5" width="24.7" height="27" fill="#f0f0f0"/><rect x="2.1" y="3.1" width="20.6" height="10.4" fill="#f0f0f0" stroke="#b9b9b9"/><path d="M2.1 13.5V3.1H22.7" fill="none" stroke="#dedede"/><rect x="2.1" y="16.7" width="20.6" height="10.2" fill="#f0f0f0" stroke="#b9b9b9"/><path d="M2.1 26.9V16.7H22.7" fill="none" stroke="#dedede"/><path d="M8.2 10.4h8.4l-4.2-4.7z"/><path d="M8.2 19.2h8.4l-4.2 4.7z"/></g><rect x="557.45" y="820.95" width="84.30" height="28.50" fill="#fff" stroke="#abadb3" stroke-width="1.5"/><g transform="translate(616.30 820.20)"><rect x="0" y="1.5" width="24.7" height="27" fill="#f0f0f0"/><rect x="2.1" y="3.1" width="20.6" height="10.4" fill="#f0f0f0" stroke="#b9b9b9"/><path d="M2.1 13.5V3.1H22.7" fill="none" stroke="#dedede"/><rect x="2.1" y="16.7" width="20.6" height="10.2" fill="#f0f0f0" stroke="#b9b9b9"/><path d="M2.1 26.9V16.7H22.7" fill="none" stroke="#dedede"/><path d="M8.2 10.4h8.4l-4.2-4.7z"/><path d="M8.2 19.2h8.4l-4.2 4.7z"/></g><rect x="652.25" y="820.95" width="97.10" height="28.50" fill="#fff" stroke="#abadb3" stroke-width="1.5"/><g transform="translate(723.90 820.20)"><rect x="0" y="1.5" width="24.7" height="27" fill="#f0f0f0"/><rect x="2.1" y="3.1" width="20.6" height="10.4" fill="#f0f0f0" stroke="#b9b9b9"/><path d="M2.1 13.5V3.1H22.7" fill="none" stroke="#dedede"/><rect x="2.1" y="16.7" width="20.6" height="10.2" fill="#f0f0f0" stroke="#b9b9b9"/><path d="M2.1 26.9V16.7H22.7" fill="none" stroke="#dedede"/><path d="M8.2 10.4h8.4l-4.2-4.7z"/><path d="M8.2 19.2h8.4l-4.2 4.7z"/></g><rect x="755.85" y="820.95" width="88.80" height="28.50" fill="#fff" stroke="#abadb3" stroke-width="1.5"/><g transform="translate(819.20 820.20)"><rect x="0" y="1.5" width="24.7" height="27" fill="#f0f0f0"/><rect x="2.1" y="3.1" width="20.6" height="10.4" fill="#f0f0f0" stroke="#b9b9b9"/><path d="M2.1 13.5V3.1H22.7" fill="none" stroke="#dedede"/><rect x="2.1" y="16.7" width="20.6" height="10.2" fill="#f0f0f0" stroke="#b9b9b9"/><path d="M2.1 26.9V16.7H22.7" fill="none" stroke="#dedede"/><path d="M8.2 10.4h8.4l-4.2-4.7z"/><path d="M8.2 19.2h8.4l-4.2 4.7z"/></g><rect x="220.75" y="856.75" width="127.50" height="29.50" fill="url(#cg)" stroke="#a7a7a7" stroke-width="1.5"/><path d="M332.40 869.30 l4.6 5.8 l4.6 -5.8" fill="none" stroke="#4a4a4a" stroke-width="2.7"/><rect x="358.95" y="856.75" width="97.20" height="28.50" fill="#fff" stroke="#abadb3" stroke-width="1.5"/><g transform="translate(430.70 856.00)"><rect x="0" y="1.5" width="24.7" height="27" fill="#f0f0f0"/><rect x="2.1" y="3.1" width="20.6" height="10.4" fill="#f0f0f0" stroke="#b9b9b9"/><path d="M2.1 13.5V3.1H22.7" fill="none" stroke="#dedede"/><rect x="2.1" y="16.7" width="20.6" height="10.2" fill="#f0f0f0" stroke="#b9b9b9"/><path d="M2.1 26.9V16.7H22.7" fill="none" stroke="#dedede"/><path d="M8.2 10.4h8.4l-4.2-4.7z"/><path d="M8.2 19.2h8.4l-4.2 4.7z"/></g><rect x="462.75" y="856.75" width="88.30" height="28.50" fill="#fff" stroke="#abadb3" stroke-width="1.5"/><g transform="translate(525.60 856.00)"><rect x="0" y="1.5" width="24.7" height="27" fill="#f0f0f0"/><rect x="2.1" y="3.1" width="20.6" height="10.4" fill="#f0f0f0" stroke="#b9b9b9"/><path d="M2.1 13.5V3.1H22.7" fill="none" stroke="#dedede"/><rect x="2.1" y="16.7" width="20.6" height="10.2" fill="#f0f0f0" stroke="#b9b9b9"/><path d="M2.1 26.9V16.7H22.7" fill="none" stroke="#dedede"/><path d="M8.2 10.4h8.4l-4.2-4.7z"/><path d="M8.2 19.2h8.4l-4.2 4.7z"/></g><rect x="557.45" y="856.75" width="84.30" height="28.50" fill="#fff" stroke="#abadb3" stroke-width="1.5"/><g transform="translate(616.30 856.00)"><rect x="0" y="1.5" width="24.7" height="27" fill="#f0f0f0"/><rect x="2.1" y="3.1" width="20.6" height="10.4" fill="#f0f0f0" stroke="#b9b9b9"/><path d="M2.1 13.5V3.1H22.7" fill="none" stroke="#dedede"/><rect x="2.1" y="16.7" width="20.6" height="10.2" fill="#f0f0f0" stroke="#b9b9b9"/><path d="M2.1 26.9V16.7H22.7" fill="none" stroke="#dedede"/><path d="M8.2 10.4h8.4l-4.2-4.7z"/><path d="M8.2 19.2h8.4l-4.2 4.7z"/></g><rect x="652.25" y="856.75" width="97.10" height="28.50" fill="#fff" stroke="#abadb3" stroke-width="1.5"/><g transform="translate(723.90 856.00)"><rect x="0" y="1.5" width="24.7" height="27" fill="#f0f0f0"/><rect x="2.1" y="3.1" width="20.6" height="10.4" fill="#f0f0f0" stroke="#b9b9b9"/><path d="M2.1 13.5V3.1H22.7" fill="none" stroke="#dedede"/><rect x="2.1" y="16.7" width="20.6" height="10.2" fill="#f0f0f0" stroke="#b9b9b9"/><path d="M2.1 26.9V16.7H22.7" fill="none" stroke="#dedede"/><path d="M8.2 10.4h8.4l-4.2-4.7z"/><path d="M8.2 19.2h8.4l-4.2 4.7z"/></g><rect x="755.85" y="856.75" width="88.80" height="28.50" fill="#fff" stroke="#abadb3" stroke-width="1.5"/><g transform="translate(819.20 856.00)"><rect x="0" y="1.5" width="24.7" height="27" fill="#f0f0f0"/><rect x="2.1" y="3.1" width="20.6" height="10.4" fill="#f0f0f0" stroke="#b9b9b9"/><path d="M2.1 13.5V3.1H22.7" fill="none" stroke="#dedede"/><rect x="2.1" y="16.7" width="20.6" height="10.2" fill="#f0f0f0" stroke="#b9b9b9"/><path d="M2.1 26.9V16.7H22.7" fill="none" stroke="#dedede"/><path d="M8.2 10.4h8.4l-4.2-4.7z"/><path d="M8.2 19.2h8.4l-4.2 4.7z"/></g><rect x="220.75" y="891.45" width="127.50" height="29.50" fill="url(#cg)" stroke="#a7a7a7" stroke-width="1.5"/><path d="M332.40 904.00 l4.6 5.8 l4.6 -5.8" fill="none" stroke="#4a4a4a" stroke-width="2.7"/><rect x="358.95" y="891.45" width="97.20" height="28.50" fill="#fff" stroke="#abadb3" stroke-width="1.5"/><g transform="translate(430.70 890.70)"><rect x="0" y="1.5" width="24.7" height="27" fill="#f0f0f0"/><rect x="2.1" y="3.1" width="20.6" height="10.4" fill="#f0f0f0" stroke="#b9b9b9"/><path d="M2.1 13.5V3.1H22.7" fill="none" stroke="#dedede"/><rect x="2.1" y="16.7" width="20.6" height="10.2" fill="#f0f0f0" stroke="#b9b9b9"/><path d="M2.1 26.9V16.7H22.7" fill="none" stroke="#dedede"/><path d="M8.2 10.4h8.4l-4.2-4.7z"/><path d="M8.2 19.2h8.4l-4.2 4.7z"/></g><rect x="462.75" y="891.45" width="88.30" height="28.50" fill="#fff" stroke="#abadb3" stroke-width="1.5"/><g transform="translate(525.60 890.70)"><rect x="0" y="1.5" width="24.7" height="27" fill="#f0f0f0"/><rect x="2.1" y="3.1" width="20.6" height="10.4" fill="#f0f0f0" stroke="#b9b9b9"/><path d="M2.1 13.5V3.1H22.7" fill="none" stroke="#dedede"/><rect x="2.1" y="16.7" width="20.6" height="10.2" fill="#f0f0f0" stroke="#b9b9b9"/><path d="M2.1 26.9V16.7H22.7" fill="none" stroke="#dedede"/><path d="M8.2 10.4h8.4l-4.2-4.7z"/><path d="M8.2 19.2h8.4l-4.2 4.7z"/></g><rect x="557.45" y="891.45" width="84.30" height="28.50" fill="#fff" stroke="#abadb3" stroke-width="1.5"/><g transform="translate(616.30 890.70)"><rect x="0" y="1.5" width="24.7" height="27" fill="#f0f0f0"/><rect x="2.1" y="3.1" width="20.6" height="10.4" fill="#f0f0f0" stroke="#b9b9b9"/><path d="M2.1 13.5V3.1H22.7" fill="none" stroke="#dedede"/><rect x="2.1" y="16.7" width="20.6" height="10.2" fill="#f0f0f0" stroke="#b9b9b9"/><path d="M2.1 26.9V16.7H22.7" fill="none" stroke="#dedede"/><path d="M8.2 10.4h8.4l-4.2-4.7z"/><path d="M8.2 19.2h8.4l-4.2 4.7z"/></g><rect x="652.25" y="891.45" width="97.10" height="28.50" fill="#fff" stroke="#abadb3" stroke-width="1.5"/><g transform="translate(723.90 890.70)"><rect x="0" y="1.5" width="24.7" height="27" fill="#f0f0f0"/><rect x="2.1" y="3.1" width="20.6" height="10.4" fill="#f0f0f0" stroke="#b9b9b9"/><path d="M2.1 13.5V3.1H22.7" fill="none" stroke="#dedede"/><rect x="2.1" y="16.7" width="20.6" height="10.2" fill="#f0f0f0" stroke="#b9b9b9"/><path d="M2.1 26.9V16.7H22.7" fill="none" stroke="#dedede"/><path d="M8.2 10.4h8.4l-4.2-4.7z"/><path d="M8.2 19.2h8.4l-4.2 4.7z"/></g><rect x="755.85" y="891.45" width="88.80" height="28.50" fill="#fff" stroke="#abadb3" stroke-width="1.5"/><g transform="translate(819.20 890.70)"><rect x="0" y="1.5" width="24.7" height="27" fill="#f0f0f0"/><rect x="2.1" y="3.1" width="20.6" height="10.4" fill="#f0f0f0" stroke="#b9b9b9"/><path d="M2.1 13.5V3.1H22.7" fill="none" stroke="#dedede"/><rect x="2.1" y="16.7" width="20.6" height="10.2" fill="#f0f0f0" stroke="#b9b9b9"/><path d="M2.1 26.9V16.7H22.7" fill="none" stroke="#dedede"/><path d="M8.2 10.4h8.4l-4.2-4.7z"/><path d="M8.2 19.2h8.4l-4.2 4.7z"/></g><rect x="220.75" y="927.35" width="127.50" height="29.50" fill="url(#cg)" stroke="#a7a7a7" stroke-width="1.5"/><path d="M332.40 939.90 l4.6 5.8 l4.6 -5.8" fill="none" stroke="#4a4a4a" stroke-width="2.7"/><rect x="358.95" y="927.35" width="97.20" height="28.50" fill="#fff" stroke="#abadb3" stroke-width="1.5"/><g transform="translate(430.70 926.60)"><rect x="0" y="1.5" width="24.7" height="27" fill="#f0f0f0"/><rect x="2.1" y="3.1" width="20.6" height="10.4" fill="#f0f0f0" stroke="#b9b9b9"/><path d="M2.1 13.5V3.1H22.7" fill="none" stroke="#dedede"/><rect x="2.1" y="16.7" width="20.6" height="10.2" fill="#f0f0f0" stroke="#b9b9b9"/><path d="M2.1 26.9V16.7H22.7" fill="none" stroke="#dedede"/><path d="M8.2 10.4h8.4l-4.2-4.7z"/><path d="M8.2 19.2h8.4l-4.2 4.7z"/></g><rect x="462.75" y="927.35" width="88.30" height="28.50" fill="#fff" stroke="#abadb3" stroke-width="1.5"/><g transform="translate(525.60 926.60)"><rect x="0" y="1.5" width="24.7" height="27" fill="#f0f0f0"/><rect x="2.1" y="3.1" width="20.6" height="10.4" fill="#f0f0f0" stroke="#b9b9b9"/><path d="M2.1 13.5V3.1H22.7" fill="none" stroke="#dedede"/><rect x="2.1" y="16.7" width="20.6" height="10.2" fill="#f0f0f0" stroke="#b9b9b9"/><path d="M2.1 26.9V16.7H22.7" fill="none" stroke="#dedede"/><path d="M8.2 10.4h8.4l-4.2-4.7z"/><path d="M8.2 19.2h8.4l-4.2 4.7z"/></g><rect x="557.45" y="927.35" width="84.30" height="28.50" fill="#fff" stroke="#abadb3" stroke-width="1.5"/><g transform="translate(616.30 926.60)"><rect x="0" y="1.5" width="24.7" height="27" fill="#f0f0f0"/><rect x="2.1" y="3.1" width="20.6" height="10.4" fill="#f0f0f0" stroke="#b9b9b9"/><path d="M2.1 13.5V3.1H22.7" fill="none" stroke="#dedede"/><rect x="2.1" y="16.7" width="20.6" height="10.2" fill="#f0f0f0" stroke="#b9b9b9"/><path d="M2.1 26.9V16.7H22.7" fill="none" stroke="#dedede"/><path d="M8.2 10.4h8.4l-4.2-4.7z"/><path d="M8.2 19.2h8.4l-4.2 4.7z"/></g><rect x="652.25" y="927.35" width="97.10" height="28.50" fill="#fff" stroke="#abadb3" stroke-width="1.5"/><g transform="translate(723.90 926.60)"><rect x="0" y="1.5" width="24.7" height="27" fill="#f0f0f0"/><rect x="2.1" y="3.1" width="20.6" height="10.4" fill="#f0f0f0" stroke="#b9b9b9"/><path d="M2.1 13.5V3.1H22.7" fill="none" stroke="#dedede"/><rect x="2.1" y="16.7" width="20.6" height="10.2" fill="#f0f0f0" stroke="#b9b9b9"/><path d="M2.1 26.9V16.7H22.7" fill="none" stroke="#dedede"/><path d="M8.2 10.4h8.4l-4.2-4.7z"/><path d="M8.2 19.2h8.4l-4.2 4.7z"/></g><rect x="755.85" y="927.35" width="88.80" height="28.50" fill="#fff" stroke="#abadb3" stroke-width="1.5"/><g transform="translate(819.20 926.60)"><rect x="0" y="1.5" width="24.7" height="27" fill="#f0f0f0"/><rect x="2.1" y="3.1" width="20.6" height="10.4" fill="#f0f0f0" stroke="#b9b9b9"/><path d="M2.1 13.5V3.1H22.7" fill="none" stroke="#dedede"/><rect x="2.1" y="16.7" width="20.6" height="10.2" fill="#f0f0f0" stroke="#b9b9b9"/><path d="M2.1 26.9V16.7H22.7" fill="none" stroke="#dedede"/><path d="M8.2 10.4h8.4l-4.2-4.7z"/><path d="M8.2 19.2h8.4l-4.2 4.7z"/></g><rect x="220.75" y="962.05" width="127.50" height="29.50" fill="url(#cg)" stroke="#a7a7a7" stroke-width="1.5"/><path d="M332.40 974.60 l4.6 5.8 l4.6 -5.8" fill="none" stroke="#4a4a4a" stroke-width="2.7"/><rect x="358.95" y="962.05" width="97.20" height="28.50" fill="#fff" stroke="#abadb3" stroke-width="1.5"/><g transform="translate(430.70 961.30)"><rect x="0" y="1.5" width="24.7" height="27" fill="#f0f0f0"/><rect x="2.1" y="3.1" width="20.6" height="10.4" fill="#f0f0f0" stroke="#b9b9b9"/><path d="M2.1 13.5V3.1H22.7" fill="none" stroke="#dedede"/><rect x="2.1" y="16.7" width="20.6" height="10.2" fill="#f0f0f0" stroke="#b9b9b9"/><path d="M2.1 26.9V16.7H22.7" fill="none" stroke="#dedede"/><path d="M8.2 10.4h8.4l-4.2-4.7z"/><path d="M8.2 19.2h8.4l-4.2 4.7z"/></g><rect x="462.75" y="962.05" width="88.30" height="28.50" fill="#fff" stroke="#abadb3" stroke-width="1.5"/><g transform="translate(525.60 961.30)"><rect x="0" y="1.5" width="24.7" height="27" fill="#f0f0f0"/><rect x="2.1" y="3.1" width="20.6" height="10.4" fill="#f0f0f0" stroke="#b9b9b9"/><path d="M2.1 13.5V3.1H22.7" fill="none" stroke="#dedede"/><rect x="2.1" y="16.7" width="20.6" height="10.2" fill="#f0f0f0" stroke="#b9b9b9"/><path d="M2.1 26.9V16.7H22.7" fill="none" stroke="#dedede"/><path d="M8.2 10.4h8.4l-4.2-4.7z"/><path d="M8.2 19.2h8.4l-4.2 4.7z"/></g><rect x="557.45" y="962.05" width="84.30" height="28.50" fill="#fff" stroke="#abadb3" stroke-width="1.5"/><g transform="translate(616.30 961.30)"><rect x="0" y="1.5" width="24.7" height="27" fill="#f0f0f0"/><rect x="2.1" y="3.1" width="20.6" height="10.4" fill="#f0f0f0" stroke="#b9b9b9"/><path d="M2.1 13.5V3.1H22.7" fill="none" stroke="#dedede"/><rect x="2.1" y="16.7" width="20.6" height="10.2" fill="#f0f0f0" stroke="#b9b9b9"/><path d="M2.1 26.9V16.7H22.7" fill="none" stroke="#dedede"/><path d="M8.2 10.4h8.4l-4.2-4.7z"/><path d="M8.2 19.2h8.4l-4.2 4.7z"/></g><rect x="652.25" y="962.05" width="97.10" height="28.50" fill="#fff" stroke="#abadb3" stroke-width="1.5"/><g transform="translate(723.90 961.30)"><rect x="0" y="1.5" width="24.7" height="27" fill="#f0f0f0"/><rect x="2.1" y="3.1" width="20.6" height="10.4" fill="#f0f0f0" stroke="#b9b9b9"/><path d="M2.1 13.5V3.1H22.7" fill="none" stroke="#dedede"/><rect x="2.1" y="16.7" width="20.6" height="10.2" fill="#f0f0f0" stroke="#b9b9b9"/><path d="M2.1 26.9V16.7H22.7" fill="none" stroke="#dedede"/><path d="M8.2 10.4h8.4l-4.2-4.7z"/><path d="M8.2 19.2h8.4l-4.2 4.7z"/></g><rect x="755.85" y="962.05" width="88.80" height="28.50" fill="#fff" stroke="#abadb3" stroke-width="1.5"/><g transform="translate(819.20 961.30)"><rect x="0" y="1.5" width="24.7" height="27" fill="#f0f0f0"/><rect x="2.1" y="3.1" width="20.6" height="10.4" fill="#f0f0f0" stroke="#b9b9b9"/><path d="M2.1 13.5V3.1H22.7" fill="none" stroke="#dedede"/><rect x="2.1" y="16.7" width="20.6" height="10.2" fill="#f0f0f0" stroke="#b9b9b9"/><path d="M2.1 26.9V16.7H22.7" fill="none" stroke="#dedede"/><path d="M8.2 10.4h8.4l-4.2-4.7z"/><path d="M8.2 19.2h8.4l-4.2 4.7z"/></g><rect x="220.75" y="997.75" width="127.50" height="29.50" fill="url(#cg)" stroke="#a7a7a7" stroke-width="1.5"/><path d="M332.40 1010.30 l4.6 5.8 l4.6 -5.8" fill="none" stroke="#4a4a4a" stroke-width="2.7"/><rect x="358.95" y="997.75" width="97.20" height="28.50" fill="#fff" stroke="#abadb3" stroke-width="1.5"/><g transform="translate(430.70 997.00)"><rect x="0" y="1.5" width="24.7" height="27" fill="#f0f0f0"/><rect x="2.1" y="3.1" width="20.6" height="10.4" fill="#f0f0f0" stroke="#b9b9b9"/><path d="M2.1 13.5V3.1H22.7" fill="none" stroke="#dedede"/><rect x="2.1" y="16.7" width="20.6" height="10.2" fill="#f0f0f0" stroke="#b9b9b9"/><path d="M2.1 26.9V16.7H22.7" fill="none" stroke="#dedede"/><path d="M8.2 10.4h8.4l-4.2-4.7z"/><path d="M8.2 19.2h8.4l-4.2 4.7z"/></g><rect x="462.75" y="997.75" width="88.30" height="28.50" fill="#fff" stroke="#abadb3" stroke-width="1.5"/><g transform="translate(525.60 997.00)"><rect x="0" y="1.5" width="24.7" height="27" fill="#f0f0f0"/><rect x="2.1" y="3.1" width="20.6" height="10.4" fill="#f0f0f0" stroke="#b9b9b9"/><path d="M2.1 13.5V3.1H22.7" fill="none" stroke="#dedede"/><rect x="2.1" y="16.7" width="20.6" height="10.2" fill="#f0f0f0" stroke="#b9b9b9"/><path d="M2.1 26.9V16.7H22.7" fill="none" stroke="#dedede"/><path d="M8.2 10.4h8.4l-4.2-4.7z"/><path d="M8.2 19.2h8.4l-4.2 4.7z"/></g><rect x="557.45" y="997.75" width="84.30" height="28.50" fill="#fff" stroke="#abadb3" stroke-width="1.5"/><g transform="translate(616.30 997.00)"><rect x="0" y="1.5" width="24.7" height="27" fill="#f0f0f0"/><rect x="2.1" y="3.1" width="20.6" height="10.4" fill="#f0f0f0" stroke="#b9b9b9"/><path d="M2.1 13.5V3.1H22.7" fill="none" stroke="#dedede"/><rect x="2.1" y="16.7" width="20.6" height="10.2" fill="#f0f0f0" stroke="#b9b9b9"/><path d="M2.1 26.9V16.7H22.7" fill="none" stroke="#dedede"/><path d="M8.2 10.4h8.4l-4.2-4.7z"/><path d="M8.2 19.2h8.4l-4.2 4.7z"/></g><rect x="652.25" y="997.75" width="97.10" height="28.50" fill="#fff" stroke="#abadb3" stroke-width="1.5"/><g transform="translate(723.90 997.00)"><rect x="0" y="1.5" width="24.7" height="27" fill="#f0f0f0"/><rect x="2.1" y="3.1" width="20.6" height="10.4" fill="#f0f0f0" stroke="#b9b9b9"/><path d="M2.1 13.5V3.1H22.7" fill="none" stroke="#dedede"/><rect x="2.1" y="16.7" width="20.6" height="10.2" fill="#f0f0f0" stroke="#b9b9b9"/><path d="M2.1 26.9V16.7H22.7" fill="none" stroke="#dedede"/><path d="M8.2 10.4h8.4l-4.2-4.7z"/><path d="M8.2 19.2h8.4l-4.2 4.7z"/></g><rect x="755.85" y="997.75" width="88.80" height="28.50" fill="#fff" stroke="#abadb3" stroke-width="1.5"/><g transform="translate(819.20 997.00)"><rect x="0" y="1.5" width="24.7" height="27" fill="#f0f0f0"/><rect x="2.1" y="3.1" width="20.6" height="10.4" fill="#f0f0f0" stroke="#b9b9b9"/><path d="M2.1 13.5V3.1H22.7" fill="none" stroke="#dedede"/><rect x="2.1" y="16.7" width="20.6" height="10.2" fill="#f0f0f0" stroke="#b9b9b9"/><path d="M2.1 26.9V16.7H22.7" fill="none" stroke="#dedede"/><path d="M8.2 10.4h8.4l-4.2-4.7z"/><path d="M8.2 19.2h8.4l-4.2 4.7z"/></g><rect x="220.75" y="1032.55" width="127.50" height="29.50" fill="url(#cg)" stroke="#a7a7a7" stroke-width="1.5"/><path d="M332.40 1045.10 l4.6 5.8 l4.6 -5.8" fill="none" stroke="#4a4a4a" stroke-width="2.7"/><rect x="358.95" y="1032.55" width="97.20" height="28.50" fill="#fff" stroke="#abadb3" stroke-width="1.5"/><g transform="translate(430.70 1031.80)"><rect x="0" y="1.5" width="24.7" height="27" fill="#f0f0f0"/><rect x="2.1" y="3.1" width="20.6" height="10.4" fill="#f0f0f0" stroke="#b9b9b9"/><path d="M2.1 13.5V3.1H22.7" fill="none" stroke="#dedede"/><rect x="2.1" y="16.7" width="20.6" height="10.2" fill="#f0f0f0" stroke="#b9b9b9"/><path d="M2.1 26.9V16.7H22.7" fill="none" stroke="#dedede"/><path d="M8.2 10.4h8.4l-4.2-4.7z"/><path d="M8.2 19.2h8.4l-4.2 4.7z"/></g><rect x="462.75" y="1032.55" width="88.30" height="28.50" fill="#fff" stroke="#abadb3" stroke-width="1.5"/><g transform="translate(525.60 1031.80)"><rect x="0" y="1.5" width="24.7" height="27" fill="#f0f0f0"/><rect x="2.1" y="3.1" width="20.6" height="10.4" fill="#f0f0f0" stroke="#b9b9b9"/><path d="M2.1 13.5V3.1H22.7" fill="none" stroke="#dedede"/><rect x="2.1" y="16.7" width="20.6" height="10.2" fill="#f0f0f0" stroke="#b9b9b9"/><path d="M2.1 26.9V16.7H22.7" fill="none" stroke="#dedede"/><path d="M8.2 10.4h8.4l-4.2-4.7z"/><path d="M8.2 19.2h8.4l-4.2 4.7z"/></g><rect x="557.45" y="1032.55" width="84.30" height="28.50" fill="#fff" stroke="#abadb3" stroke-width="1.5"/><g transform="translate(616.30 1031.80)"><rect x="0" y="1.5" width="24.7" height="27" fill="#f0f0f0"/><rect x="2.1" y="3.1" width="20.6" height="10.4" fill="#f0f0f0" stroke="#b9b9b9"/><path d="M2.1 13.5V3.1H22.7" fill="none" stroke="#dedede"/><rect x="2.1" y="16.7" width="20.6" height="10.2" fill="#f0f0f0" stroke="#b9b9b9"/><path d="M2.1 26.9V16.7H22.7" fill="none" stroke="#dedede"/><path d="M8.2 10.4h8.4l-4.2-4.7z"/><path d="M8.2 19.2h8.4l-4.2 4.7z"/></g><rect x="652.25" y="1032.55" width="97.10" height="28.50" fill="#fff" stroke="#abadb3" stroke-width="1.5"/><g transform="translate(723.90 1031.80)"><rect x="0" y="1.5" width="24.7" height="27" fill="#f0f0f0"/><rect x="2.1" y="3.1" width="20.6" height="10.4" fill="#f0f0f0" stroke="#b9b9b9"/><path d="M2.1 13.5V3.1H22.7" fill="none" stroke="#dedede"/><rect x="2.1" y="16.7" width="20.6" height="10.2" fill="#f0f0f0" stroke="#b9b9b9"/><path d="M2.1 26.9V16.7H22.7" fill="none" stroke="#dedede"/><path d="M8.2 10.4h8.4l-4.2-4.7z"/><path d="M8.2 19.2h8.4l-4.2 4.7z"/></g><rect x="755.85" y="1032.55" width="88.80" height="28.50" fill="#fff" stroke="#abadb3" stroke-width="1.5"/><g transform="translate(819.20 1031.80)"><rect x="0" y="1.5" width="24.7" height="27" fill="#f0f0f0"/><rect x="2.1" y="3.1" width="20.6" height="10.4" fill="#f0f0f0" stroke="#b9b9b9"/><path d="M2.1 13.5V3.1H22.7" fill="none" stroke="#dedede"/><rect x="2.1" y="16.7" width="20.6" height="10.2" fill="#f0f0f0" stroke="#b9b9b9"/><path d="M2.1 26.9V16.7H22.7" fill="none" stroke="#dedede"/><path d="M8.2 10.4h8.4l-4.2-4.7z"/><path d="M8.2 19.2h8.4l-4.2 4.7z"/></g><rect x="190.75" y="1092.75" width="127.50" height="29.50" fill="url(#cg)" stroke="#a7a7a7" stroke-width="1.5"/><path d="M302.40 1105.30 l4.6 5.8 l4.6 -5.8" fill="none" stroke="#4a4a4a" stroke-width="2.7"/><rect x="332.85" y="1092.75" width="106.10" height="28.50" fill="#fff" stroke="#abadb3" stroke-width="1.5"/><g transform="translate(413.50 1092.00)"><rect x="0" y="1.5" width="24.7" height="27" fill="#f0f0f0"/><rect x="2.1" y="3.1" width="20.6" height="10.4" fill="#f0f0f0" stroke="#b9b9b9"/><path d="M2.1 13.5V3.1H22.7" fill="none" stroke="#dedede"/><rect x="2.1" y="16.7" width="20.6" height="10.2" fill="#f0f0f0" stroke="#b9b9b9"/><path d="M2.1 26.9V16.7H22.7" fill="none" stroke="#dedede"/><path d="M8.2 10.4h8.4l-4.2-4.7z"/><path d="M8.2 19.2h8.4l-4.2 4.7z"/></g><rect x="444.95" y="1092.75" width="106.10" height="29.50" fill="url(#cg)" stroke="#a7a7a7" stroke-width="1.5"/><path d="M535.20 1105.30 l4.6 5.8 l4.6 -5.8" fill="none" stroke="#4a4a4a" stroke-width="2.7"/><rect x="557.45" y="1092.75" width="84.30" height="28.50" fill="#fff" stroke="#abadb3" stroke-width="1.5"/><g transform="translate(616.30 1092.00)"><rect x="0" y="1.5" width="24.7" height="27" fill="#f0f0f0"/><rect x="2.1" y="3.1" width="20.6" height="10.4" fill="#f0f0f0" stroke="#b9b9b9"/><path d="M2.1 13.5V3.1H22.7" fill="none" stroke="#dedede"/><rect x="2.1" y="16.7" width="20.6" height="10.2" fill="#f0f0f0" stroke="#b9b9b9"/><path d="M2.1 26.9V16.7H22.7" fill="none" stroke="#dedede"/><path d="M8.2 10.4h8.4l-4.2-4.7z"/><path d="M8.2 19.2h8.4l-4.2 4.7z"/></g><rect x="902.75" y="757.75" width="343.00" height="29.50" fill="url(#cg)" stroke="#a7a7a7" stroke-width="1.5"/><path d="M1229.90 770.30 l4.6 5.8 l4.6 -5.8" fill="none" stroke="#4a4a4a" stroke-width="2.7"/><rect x="1282.35" y="758.15" width="84.20" height="28.10" fill="#fff" stroke="#abadb3" stroke-width="1.5"/><g transform="translate(1341.10 757.40)"><rect x="0" y="1.5" width="24.7" height="27" fill="#f0f0f0"/><rect x="2.1" y="3.1" width="20.6" height="10.4" fill="#f0f0f0" stroke="#b9b9b9"/><path d="M2.1 13.5V3.1H22.7" fill="none" stroke="#dedede"/><rect x="2.1" y="16.7" width="20.6" height="10.2" fill="#f0f0f0" stroke="#b9b9b9"/><path d="M2.1 26.9V16.7H22.7" fill="none" stroke="#dedede"/><path d="M8.2 10.4h8.4l-4.2-4.7z"/><path d="M8.2 19.2h8.4l-4.2 4.7z"/></g><rect x="1381.55" y="757.75" width="84.50" height="29.50" fill="url(#cg)" stroke="#a7a7a7" stroke-width="1.5"/><path d="M1450.20 770.30 l4.6 5.8 l4.6 -5.8" fill="none" stroke="#4a4a4a" stroke-width="2.7"/><rect x="1486.35" y="758.75" width="103.70" height="28.50" fill="url(#cg)" stroke="#a7a7a7" stroke-width="1.5"/><rect x="932.75" y="820.95" width="127.50" height="29.50" fill="url(#cg)" stroke="#a7a7a7" stroke-width="1.5"/><path d="M1044.40 833.50 l4.6 5.8 l4.6 -5.8" fill="none" stroke="#4a4a4a" stroke-width="2.7"/><rect x="1070.95" y="820.95" width="97.20" height="28.50" fill="#fff" stroke="#abadb3" stroke-width="1.5"/><g transform="translate(1142.70 820.20)"><rect x="0" y="1.5" width="24.7" height="27" fill="#f0f0f0"/><rect x="2.1" y="3.1" width="20.6" height="10.4" fill="#f0f0f0" stroke="#b9b9b9"/><path d="M2.1 13.5V3.1H22.7" fill="none" stroke="#dedede"/><rect x="2.1" y="16.7" width="20.6" height="10.2" fill="#f0f0f0" stroke="#b9b9b9"/><path d="M2.1 26.9V16.7H22.7" fill="none" stroke="#dedede"/><path d="M8.2 10.4h8.4l-4.2-4.7z"/><path d="M8.2 19.2h8.4l-4.2 4.7z"/></g><rect x="1174.75" y="820.95" width="88.30" height="28.50" fill="#fff" stroke="#abadb3" stroke-width="1.5"/><g transform="translate(1237.60 820.20)"><rect x="0" y="1.5" width="24.7" height="27" fill="#f0f0f0"/><rect x="2.1" y="3.1" width="20.6" height="10.4" fill="#f0f0f0" stroke="#b9b9b9"/><path d="M2.1 13.5V3.1H22.7" fill="none" stroke="#dedede"/><rect x="2.1" y="16.7" width="20.6" height="10.2" fill="#f0f0f0" stroke="#b9b9b9"/><path d="M2.1 26.9V16.7H22.7" fill="none" stroke="#dedede"/><path d="M8.2 10.4h8.4l-4.2-4.7z"/><path d="M8.2 19.2h8.4l-4.2 4.7z"/></g><rect x="1269.45" y="820.95" width="84.30" height="28.50" fill="#fff" stroke="#abadb3" stroke-width="1.5"/><g transform="translate(1328.30 820.20)"><rect x="0" y="1.5" width="24.7" height="27" fill="#f0f0f0"/><rect x="2.1" y="3.1" width="20.6" height="10.4" fill="#f0f0f0" stroke="#b9b9b9"/><path d="M2.1 13.5V3.1H22.7" fill="none" stroke="#dedede"/><rect x="2.1" y="16.7" width="20.6" height="10.2" fill="#f0f0f0" stroke="#b9b9b9"/><path d="M2.1 26.9V16.7H22.7" fill="none" stroke="#dedede"/><path d="M8.2 10.4h8.4l-4.2-4.7z"/><path d="M8.2 19.2h8.4l-4.2 4.7z"/></g><rect x="1364.25" y="820.95" width="97.10" height="28.50" fill="#fff" stroke="#abadb3" stroke-width="1.5"/><g transform="translate(1435.90 820.20)"><rect x="0" y="1.5" width="24.7" height="27" fill="#f0f0f0"/><rect x="2.1" y="3.1" width="20.6" height="10.4" fill="#f0f0f0" stroke="#b9b9b9"/><path d="M2.1 13.5V3.1H22.7" fill="none" stroke="#dedede"/><rect x="2.1" y="16.7" width="20.6" height="10.2" fill="#f0f0f0" stroke="#b9b9b9"/><path d="M2.1 26.9V16.7H22.7" fill="none" stroke="#dedede"/><path d="M8.2 10.4h8.4l-4.2-4.7z"/><path d="M8.2 19.2h8.4l-4.2 4.7z"/></g><rect x="1467.85" y="820.95" width="88.80" height="28.50" fill="#fff" stroke="#abadb3" stroke-width="1.5"/><g transform="translate(1531.20 820.20)"><rect x="0" y="1.5" width="24.7" height="27" fill="#f0f0f0"/><rect x="2.1" y="3.1" width="20.6" height="10.4" fill="#f0f0f0" stroke="#b9b9b9"/><path d="M2.1 13.5V3.1H22.7" fill="none" stroke="#dedede"/><rect x="2.1" y="16.7" width="20.6" height="10.2" fill="#f0f0f0" stroke="#b9b9b9"/><path d="M2.1 26.9V16.7H22.7" fill="none" stroke="#dedede"/><path d="M8.2 10.4h8.4l-4.2-4.7z"/><path d="M8.2 19.2h8.4l-4.2 4.7z"/></g><rect x="932.75" y="856.75" width="127.50" height="29.50" fill="url(#cg)" stroke="#a7a7a7" stroke-width="1.5"/><path d="M1044.40 869.30 l4.6 5.8 l4.6 -5.8" fill="none" stroke="#4a4a4a" stroke-width="2.7"/><rect x="1070.95" y="856.75" width="97.20" height="28.50" fill="#fff" stroke="#abadb3" stroke-width="1.5"/><g transform="translate(1142.70 856.00)"><rect x="0" y="1.5" width="24.7" height="27" fill="#f0f0f0"/><rect x="2.1" y="3.1" width="20.6" height="10.4" fill="#f0f0f0" stroke="#b9b9b9"/><path d="M2.1 13.5V3.1H22.7" fill="none" stroke="#dedede"/><rect x="2.1" y="16.7" width="20.6" height="10.2" fill="#f0f0f0" stroke="#b9b9b9"/><path d="M2.1 26.9V16.7H22.7" fill="none" stroke="#dedede"/><path d="M8.2 10.4h8.4l-4.2-4.7z"/><path d="M8.2 19.2h8.4l-4.2 4.7z"/></g><rect x="1174.75" y="856.75" width="88.30" height="28.50" fill="#fff" stroke="#abadb3" stroke-width="1.5"/><g transform="translate(1237.60 856.00)"><rect x="0" y="1.5" width="24.7" height="27" fill="#f0f0f0"/><rect x="2.1" y="3.1" width="20.6" height="10.4" fill="#f0f0f0" stroke="#b9b9b9"/><path d="M2.1 13.5V3.1H22.7" fill="none" stroke="#dedede"/><rect x="2.1" y="16.7" width="20.6" height="10.2" fill="#f0f0f0" stroke="#b9b9b9"/><path d="M2.1 26.9V16.7H22.7" fill="none" stroke="#dedede"/><path d="M8.2 10.4h8.4l-4.2-4.7z"/><path d="M8.2 19.2h8.4l-4.2 4.7z"/></g><rect x="1269.45" y="856.75" width="84.30" height="28.50" fill="#fff" stroke="#abadb3" stroke-width="1.5"/><g transform="translate(1328.30 856.00)"><rect x="0" y="1.5" width="24.7" height="27" fill="#f0f0f0"/><rect x="2.1" y="3.1" width="20.6" height="10.4" fill="#f0f0f0" stroke="#b9b9b9"/><path d="M2.1 13.5V3.1H22.7" fill="none" stroke="#dedede"/><rect x="2.1" y="16.7" width="20.6" height="10.2" fill="#f0f0f0" stroke="#b9b9b9"/><path d="M2.1 26.9V16.7H22.7" fill="none" stroke="#dedede"/><path d="M8.2 10.4h8.4l-4.2-4.7z"/><path d="M8.2 19.2h8.4l-4.2 4.7z"/></g><rect x="1364.25" y="856.75" width="97.10" height="28.50" fill="#fff" stroke="#abadb3" stroke-width="1.5"/><g transform="translate(1435.90 856.00)"><rect x="0" y="1.5" width="24.7" height="27" fill="#f0f0f0"/><rect x="2.1" y="3.1" width="20.6" height="10.4" fill="#f0f0f0" stroke="#b9b9b9"/><path d="M2.1 13.5V3.1H22.7" fill="none" stroke="#dedede"/><rect x="2.1" y="16.7" width="20.6" height="10.2" fill="#f0f0f0" stroke="#b9b9b9"/><path d="M2.1 26.9V16.7H22.7" fill="none" stroke="#dedede"/><path d="M8.2 10.4h8.4l-4.2-4.7z"/><path d="M8.2 19.2h8.4l-4.2 4.7z"/></g><rect x="1467.85" y="856.75" width="88.80" height="28.50" fill="#fff" stroke="#abadb3" stroke-width="1.5"/><g transform="translate(1531.20 856.00)"><rect x="0" y="1.5" width="24.7" height="27" fill="#f0f0f0"/><rect x="2.1" y="3.1" width="20.6" height="10.4" fill="#f0f0f0" stroke="#b9b9b9"/><path d="M2.1 13.5V3.1H22.7" fill="none" stroke="#dedede"/><rect x="2.1" y="16.7" width="20.6" height="10.2" fill="#f0f0f0" stroke="#b9b9b9"/><path d="M2.1 26.9V16.7H22.7" fill="none" stroke="#dedede"/><path d="M8.2 10.4h8.4l-4.2-4.7z"/><path d="M8.2 19.2h8.4l-4.2 4.7z"/></g><rect x="932.75" y="891.45" width="127.50" height="29.50" fill="url(#cg)" stroke="#a7a7a7" stroke-width="1.5"/><path d="M1044.40 904.00 l4.6 5.8 l4.6 -5.8" fill="none" stroke="#4a4a4a" stroke-width="2.7"/><rect x="1070.95" y="891.45" width="97.20" height="28.50" fill="#fff" stroke="#abadb3" stroke-width="1.5"/><g transform="translate(1142.70 890.70)"><rect x="0" y="1.5" width="24.7" height="27" fill="#f0f0f0"/><rect x="2.1" y="3.1" width="20.6" height="10.4" fill="#f0f0f0" stroke="#b9b9b9"/><path d="M2.1 13.5V3.1H22.7" fill="none" stroke="#dedede"/><rect x="2.1" y="16.7" width="20.6" height="10.2" fill="#f0f0f0" stroke="#b9b9b9"/><path d="M2.1 26.9V16.7H22.7" fill="none" stroke="#dedede"/><path d="M8.2 10.4h8.4l-4.2-4.7z"/><path d="M8.2 19.2h8.4l-4.2 4.7z"/></g><rect x="1174.75" y="891.45" width="88.30" height="28.50" fill="#fff" stroke="#abadb3" stroke-width="1.5"/><g transform="translate(1237.60 890.70)"><rect x="0" y="1.5" width="24.7" height="27" fill="#f0f0f0"/><rect x="2.1" y="3.1" width="20.6" height="10.4" fill="#f0f0f0" stroke="#b9b9b9"/><path d="M2.1 13.5V3.1H22.7" fill="none" stroke="#dedede"/><rect x="2.1" y="16.7" width="20.6" height="10.2" fill="#f0f0f0" stroke="#b9b9b9"/><path d="M2.1 26.9V16.7H22.7" fill="none" stroke="#dedede"/><path d="M8.2 10.4h8.4l-4.2-4.7z"/><path d="M8.2 19.2h8.4l-4.2 4.7z"/></g><rect x="1269.45" y="891.45" width="84.30" height="28.50" fill="#fff" stroke="#abadb3" stroke-width="1.5"/><g transform="translate(1328.30 890.70)"><rect x="0" y="1.5" width="24.7" height="27" fill="#f0f0f0"/><rect x="2.1" y="3.1" width="20.6" height="10.4" fill="#f0f0f0" stroke="#b9b9b9"/><path d="M2.1 13.5V3.1H22.7" fill="none" stroke="#dedede"/><rect x="2.1" y="16.7" width="20.6" height="10.2" fill="#f0f0f0" stroke="#b9b9b9"/><path d="M2.1 26.9V16.7H22.7" fill="none" stroke="#dedede"/><path d="M8.2 10.4h8.4l-4.2-4.7z"/><path d="M8.2 19.2h8.4l-4.2 4.7z"/></g><rect x="1364.25" y="891.45" width="97.10" height="28.50" fill="#fff" stroke="#abadb3" stroke-width="1.5"/><g transform="translate(1435.90 890.70)"><rect x="0" y="1.5" width="24.7" height="27" fill="#f0f0f0"/><rect x="2.1" y="3.1" width="20.6" height="10.4" fill="#f0f0f0" stroke="#b9b9b9"/><path d="M2.1 13.5V3.1H22.7" fill="none" stroke="#dedede"/><rect x="2.1" y="16.7" width="20.6" height="10.2" fill="#f0f0f0" stroke="#b9b9b9"/><path d="M2.1 26.9V16.7H22.7" fill="none" stroke="#dedede"/><path d="M8.2 10.4h8.4l-4.2-4.7z"/><path d="M8.2 19.2h8.4l-4.2 4.7z"/></g><rect x="1467.85" y="891.45" width="88.80" height="28.50" fill="#fff" stroke="#abadb3" stroke-width="1.5"/><g transform="translate(1531.20 890.70)"><rect x="0" y="1.5" width="24.7" height="27" fill="#f0f0f0"/><rect x="2.1" y="3.1" width="20.6" height="10.4" fill="#f0f0f0" stroke="#b9b9b9"/><path d="M2.1 13.5V3.1H22.7" fill="none" stroke="#dedede"/><rect x="2.1" y="16.7" width="20.6" height="10.2" fill="#f0f0f0" stroke="#b9b9b9"/><path d="M2.1 26.9V16.7H22.7" fill="none" stroke="#dedede"/><path d="M8.2 10.4h8.4l-4.2-4.7z"/><path d="M8.2 19.2h8.4l-4.2 4.7z"/></g><rect x="932.75" y="927.35" width="127.50" height="29.50" fill="url(#cg)" stroke="#a7a7a7" stroke-width="1.5"/><path d="M1044.40 939.90 l4.6 5.8 l4.6 -5.8" fill="none" stroke="#4a4a4a" stroke-width="2.7"/><rect x="1070.95" y="927.35" width="97.20" height="28.50" fill="#fff" stroke="#abadb3" stroke-width="1.5"/><g transform="translate(1142.70 926.60)"><rect x="0" y="1.5" width="24.7" height="27" fill="#f0f0f0"/><rect x="2.1" y="3.1" width="20.6" height="10.4" fill="#f0f0f0" stroke="#b9b9b9"/><path d="M2.1 13.5V3.1H22.7" fill="none" stroke="#dedede"/><rect x="2.1" y="16.7" width="20.6" height="10.2" fill="#f0f0f0" stroke="#b9b9b9"/><path d="M2.1 26.9V16.7H22.7" fill="none" stroke="#dedede"/><path d="M8.2 10.4h8.4l-4.2-4.7z"/><path d="M8.2 19.2h8.4l-4.2 4.7z"/></g><rect x="1174.75" y="927.35" width="88.30" height="28.50" fill="#fff" stroke="#abadb3" stroke-width="1.5"/><g transform="translate(1237.60 926.60)"><rect x="0" y="1.5" width="24.7" height="27" fill="#f0f0f0"/><rect x="2.1" y="3.1" width="20.6" height="10.4" fill="#f0f0f0" stroke="#b9b9b9"/><path d="M2.1 13.5V3.1H22.7" fill="none" stroke="#dedede"/><rect x="2.1" y="16.7" width="20.6" height="10.2" fill="#f0f0f0" stroke="#b9b9b9"/><path d="M2.1 26.9V16.7H22.7" fill="none" stroke="#dedede"/><path d="M8.2 10.4h8.4l-4.2-4.7z"/><path d="M8.2 19.2h8.4l-4.2 4.7z"/></g><rect x="1269.45" y="927.35" width="84.30" height="28.50" fill="#fff" stroke="#abadb3" stroke-width="1.5"/><g transform="translate(1328.30 926.60)"><rect x="0" y="1.5" width="24.7" height="27" fill="#f0f0f0"/><rect x="2.1" y="3.1" width="20.6" height="10.4" fill="#f0f0f0" stroke="#b9b9b9"/><path d="M2.1 13.5V3.1H22.7" fill="none" stroke="#dedede"/><rect x="2.1" y="16.7" width="20.6" height="10.2" fill="#f0f0f0" stroke="#b9b9b9"/><path d="M2.1 26.9V16.7H22.7" fill="none" stroke="#dedede"/><path d="M8.2 10.4h8.4l-4.2-4.7z"/><path d="M8.2 19.2h8.4l-4.2 4.7z"/></g><rect x="1364.25" y="927.35" width="97.10" height="28.50" fill="#fff" stroke="#abadb3" stroke-width="1.5"/><g transform="translate(1435.90 926.60)"><rect x="0" y="1.5" width="24.7" height="27" fill="#f0f0f0"/><rect x="2.1" y="3.1" width="20.6" height="10.4" fill="#f0f0f0" stroke="#b9b9b9"/><path d="M2.1 13.5V3.1H22.7" fill="none" stroke="#dedede"/><rect x="2.1" y="16.7" width="20.6" height="10.2" fill="#f0f0f0" stroke="#b9b9b9"/><path d="M2.1 26.9V16.7H22.7" fill="none" stroke="#dedede"/><path d="M8.2 10.4h8.4l-4.2-4.7z"/><path d="M8.2 19.2h8.4l-4.2 4.7z"/></g><rect x="1467.85" y="927.35" width="88.80" height="28.50" fill="#fff" stroke="#abadb3" stroke-width="1.5"/><g transform="translate(1531.20 926.60)"><rect x="0" y="1.5" width="24.7" height="27" fill="#f0f0f0"/><rect x="2.1" y="3.1" width="20.6" height="10.4" fill="#f0f0f0" stroke="#b9b9b9"/><path d="M2.1 13.5V3.1H22.7" fill="none" stroke="#dedede"/><rect x="2.1" y="16.7" width="20.6" height="10.2" fill="#f0f0f0" stroke="#b9b9b9"/><path d="M2.1 26.9V16.7H22.7" fill="none" stroke="#dedede"/><path d="M8.2 10.4h8.4l-4.2-4.7z"/><path d="M8.2 19.2h8.4l-4.2 4.7z"/></g><rect x="932.75" y="962.05" width="127.50" height="29.50" fill="url(#cg)" stroke="#a7a7a7" stroke-width="1.5"/><path d="M1044.40 974.60 l4.6 5.8 l4.6 -5.8" fill="none" stroke="#4a4a4a" stroke-width="2.7"/><rect x="1070.95" y="962.05" width="97.20" height="28.50" fill="#fff" stroke="#abadb3" stroke-width="1.5"/><g transform="translate(1142.70 961.30)"><rect x="0" y="1.5" width="24.7" height="27" fill="#f0f0f0"/><rect x="2.1" y="3.1" width="20.6" height="10.4" fill="#f0f0f0" stroke="#b9b9b9"/><path d="M2.1 13.5V3.1H22.7" fill="none" stroke="#dedede"/><rect x="2.1" y="16.7" width="20.6" height="10.2" fill="#f0f0f0" stroke="#b9b9b9"/><path d="M2.1 26.9V16.7H22.7" fill="none" stroke="#dedede"/><path d="M8.2 10.4h8.4l-4.2-4.7z"/><path d="M8.2 19.2h8.4l-4.2 4.7z"/></g><rect x="1174.75" y="962.05" width="88.30" height="28.50" fill="#fff" stroke="#abadb3" stroke-width="1.5"/><g transform="translate(1237.60 961.30)"><rect x="0" y="1.5" width="24.7" height="27" fill="#f0f0f0"/><rect x="2.1" y="3.1" width="20.6" height="10.4" fill="#f0f0f0" stroke="#b9b9b9"/><path d="M2.1 13.5V3.1H22.7" fill="none" stroke="#dedede"/><rect x="2.1" y="16.7" width="20.6" height="10.2" fill="#f0f0f0" stroke="#b9b9b9"/><path d="M2.1 26.9V16.7H22.7" fill="none" stroke="#dedede"/><path d="M8.2 10.4h8.4l-4.2-4.7z"/><path d="M8.2 19.2h8.4l-4.2 4.7z"/></g><rect x="1269.45" y="962.05" width="84.30" height="28.50" fill="#fff" stroke="#abadb3" stroke-width="1.5"/><g transform="translate(1328.30 961.30)"><rect x="0" y="1.5" width="24.7" height="27" fill="#f0f0f0"/><rect x="2.1" y="3.1" width="20.6" height="10.4" fill="#f0f0f0" stroke="#b9b9b9"/><path d="M2.1 13.5V3.1H22.7" fill="none" stroke="#dedede"/><rect x="2.1" y="16.7" width="20.6" height="10.2" fill="#f0f0f0" stroke="#b9b9b9"/><path d="M2.1 26.9V16.7H22.7" fill="none" stroke="#dedede"/><path d="M8.2 10.4h8.4l-4.2-4.7z"/><path d="M8.2 19.2h8.4l-4.2 4.7z"/></g><rect x="1364.25" y="962.05" width="97.10" height="28.50" fill="#fff" stroke="#abadb3" stroke-width="1.5"/><g transform="translate(1435.90 961.30)"><rect x="0" y="1.5" width="24.7" height="27" fill="#f0f0f0"/><rect x="2.1" y="3.1" width="20.6" height="10.4" fill="#f0f0f0" stroke="#b9b9b9"/><path d="M2.1 13.5V3.1H22.7" fill="none" stroke="#dedede"/><rect x="2.1" y="16.7" width="20.6" height="10.2" fill="#f0f0f0" stroke="#b9b9b9"/><path d="M2.1 26.9V16.7H22.7" fill="none" stroke="#dedede"/><path d="M8.2 10.4h8.4l-4.2-4.7z"/><path d="M8.2 19.2h8.4l-4.2 4.7z"/></g><rect x="1467.85" y="962.05" width="88.80" height="28.50" fill="#fff" stroke="#abadb3" stroke-width="1.5"/><g transform="translate(1531.20 961.30)"><rect x="0" y="1.5" width="24.7" height="27" fill="#f0f0f0"/><rect x="2.1" y="3.1" width="20.6" height="10.4" fill="#f0f0f0" stroke="#b9b9b9"/><path d="M2.1 13.5V3.1H22.7" fill="none" stroke="#dedede"/><rect x="2.1" y="16.7" width="20.6" height="10.2" fill="#f0f0f0" stroke="#b9b9b9"/><path d="M2.1 26.9V16.7H22.7" fill="none" stroke="#dedede"/><path d="M8.2 10.4h8.4l-4.2-4.7z"/><path d="M8.2 19.2h8.4l-4.2 4.7z"/></g><rect x="932.75" y="997.75" width="127.50" height="29.50" fill="url(#cg)" stroke="#a7a7a7" stroke-width="1.5"/><path d="M1044.40 1010.30 l4.6 5.8 l4.6 -5.8" fill="none" stroke="#4a4a4a" stroke-width="2.7"/><rect x="1070.95" y="997.75" width="97.20" height="28.50" fill="#fff" stroke="#abadb3" stroke-width="1.5"/><g transform="translate(1142.70 997.00)"><rect x="0" y="1.5" width="24.7" height="27" fill="#f0f0f0"/><rect x="2.1" y="3.1" width="20.6" height="10.4" fill="#f0f0f0" stroke="#b9b9b9"/><path d="M2.1 13.5V3.1H22.7" fill="none" stroke="#dedede"/><rect x="2.1" y="16.7" width="20.6" height="10.2" fill="#f0f0f0" stroke="#b9b9b9"/><path d="M2.1 26.9V16.7H22.7" fill="none" stroke="#dedede"/><path d="M8.2 10.4h8.4l-4.2-4.7z"/><path d="M8.2 19.2h8.4l-4.2 4.7z"/></g><rect x="1174.75" y="997.75" width="88.30" height="28.50" fill="#fff" stroke="#abadb3" stroke-width="1.5"/><g transform="translate(1237.60 997.00)"><rect x="0" y="1.5" width="24.7" height="27" fill="#f0f0f0"/><rect x="2.1" y="3.1" width="20.6" height="10.4" fill="#f0f0f0" stroke="#b9b9b9"/><path d="M2.1 13.5V3.1H22.7" fill="none" stroke="#dedede"/><rect x="2.1" y="16.7" width="20.6" height="10.2" fill="#f0f0f0" stroke="#b9b9b9"/><path d="M2.1 26.9V16.7H22.7" fill="none" stroke="#dedede"/><path d="M8.2 10.4h8.4l-4.2-4.7z"/><path d="M8.2 19.2h8.4l-4.2 4.7z"/></g><rect x="1269.45" y="997.75" width="84.30" height="28.50" fill="#fff" stroke="#abadb3" stroke-width="1.5"/><g transform="translate(1328.30 997.00)"><rect x="0" y="1.5" width="24.7" height="27" fill="#f0f0f0"/><rect x="2.1" y="3.1" width="20.6" height="10.4" fill="#f0f0f0" stroke="#b9b9b9"/><path d="M2.1 13.5V3.1H22.7" fill="none" stroke="#dedede"/><rect x="2.1" y="16.7" width="20.6" height="10.2" fill="#f0f0f0" stroke="#b9b9b9"/><path d="M2.1 26.9V16.7H22.7" fill="none" stroke="#dedede"/><path d="M8.2 10.4h8.4l-4.2-4.7z"/><path d="M8.2 19.2h8.4l-4.2 4.7z"/></g><rect x="1364.25" y="997.75" width="97.10" height="28.50" fill="#fff" stroke="#abadb3" stroke-width="1.5"/><g transform="translate(1435.90 997.00)"><rect x="0" y="1.5" width="24.7" height="27" fill="#f0f0f0"/><rect x="2.1" y="3.1" width="20.6" height="10.4" fill="#f0f0f0" stroke="#b9b9b9"/><path d="M2.1 13.5V3.1H22.7" fill="none" stroke="#dedede"/><rect x="2.1" y="16.7" width="20.6" height="10.2" fill="#f0f0f0" stroke="#b9b9b9"/><path d="M2.1 26.9V16.7H22.7" fill="none" stroke="#dedede"/><path d="M8.2 10.4h8.4l-4.2-4.7z"/><path d="M8.2 19.2h8.4l-4.2 4.7z"/></g><rect x="1467.85" y="997.75" width="88.80" height="28.50" fill="#fff" stroke="#abadb3" stroke-width="1.5"/><g transform="translate(1531.20 997.00)"><rect x="0" y="1.5" width="24.7" height="27" fill="#f0f0f0"/><rect x="2.1" y="3.1" width="20.6" height="10.4" fill="#f0f0f0" stroke="#b9b9b9"/><path d="M2.1 13.5V3.1H22.7" fill="none" stroke="#dedede"/><rect x="2.1" y="16.7" width="20.6" height="10.2" fill="#f0f0f0" stroke="#b9b9b9"/><path d="M2.1 26.9V16.7H22.7" fill="none" stroke="#dedede"/><path d="M8.2 10.4h8.4l-4.2-4.7z"/><path d="M8.2 19.2h8.4l-4.2 4.7z"/></g><rect x="932.75" y="1032.55" width="127.50" height="29.50" fill="url(#cg)" stroke="#a7a7a7" stroke-width="1.5"/><path d="M1044.40 1045.10 l4.6 5.8 l4.6 -5.8" fill="none" stroke="#4a4a4a" stroke-width="2.7"/><rect x="1070.95" y="1032.55" width="97.20" height="28.50" fill="#fff" stroke="#abadb3" stroke-width="1.5"/><g transform="translate(1142.70 1031.80)"><rect x="0" y="1.5" width="24.7" height="27" fill="#f0f0f0"/><rect x="2.1" y="3.1" width="20.6" height="10.4" fill="#f0f0f0" stroke="#b9b9b9"/><path d="M2.1 13.5V3.1H22.7" fill="none" stroke="#dedede"/><rect x="2.1" y="16.7" width="20.6" height="10.2" fill="#f0f0f0" stroke="#b9b9b9"/><path d="M2.1 26.9V16.7H22.7" fill="none" stroke="#dedede"/><path d="M8.2 10.4h8.4l-4.2-4.7z"/><path d="M8.2 19.2h8.4l-4.2 4.7z"/></g><rect x="1174.75" y="1032.55" width="88.30" height="28.50" fill="#fff" stroke="#abadb3" stroke-width="1.5"/><g transform="translate(1237.60 1031.80)"><rect x="0" y="1.5" width="24.7" height="27" fill="#f0f0f0"/><rect x="2.1" y="3.1" width="20.6" height="10.4" fill="#f0f0f0" stroke="#b9b9b9"/><path d="M2.1 13.5V3.1H22.7" fill="none" stroke="#dedede"/><rect x="2.1" y="16.7" width="20.6" height="10.2" fill="#f0f0f0" stroke="#b9b9b9"/><path d="M2.1 26.9V16.7H22.7" fill="none" stroke="#dedede"/><path d="M8.2 10.4h8.4l-4.2-4.7z"/><path d="M8.2 19.2h8.4l-4.2 4.7z"/></g><rect x="1269.45" y="1032.55" width="84.30" height="28.50" fill="#fff" stroke="#abadb3" stroke-width="1.5"/><g transform="translate(1328.30 1031.80)"><rect x="0" y="1.5" width="24.7" height="27" fill="#f0f0f0"/><rect x="2.1" y="3.1" width="20.6" height="10.4" fill="#f0f0f0" stroke="#b9b9b9"/><path d="M2.1 13.5V3.1H22.7" fill="none" stroke="#dedede"/><rect x="2.1" y="16.7" width="20.6" height="10.2" fill="#f0f0f0" stroke="#b9b9b9"/><path d="M2.1 26.9V16.7H22.7" fill="none" stroke="#dedede"/><path d="M8.2 10.4h8.4l-4.2-4.7z"/><path d="M8.2 19.2h8.4l-4.2 4.7z"/></g><rect x="1364.25" y="1032.55" width="97.10" height="28.50" fill="#fff" stroke="#abadb3" stroke-width="1.5"/><g transform="translate(1435.90 1031.80)"><rect x="0" y="1.5" width="24.7" height="27" fill="#f0f0f0"/><rect x="2.1" y="3.1" width="20.6" height="10.4" fill="#f0f0f0" stroke="#b9b9b9"/><path d="M2.1 13.5V3.1H22.7" fill="none" stroke="#dedede"/><rect x="2.1" y="16.7" width="20.6" height="10.2" fill="#f0f0f0" stroke="#b9b9b9"/><path d="M2.1 26.9V16.7H22.7" fill="none" stroke="#dedede"/><path d="M8.2 10.4h8.4l-4.2-4.7z"/><path d="M8.2 19.2h8.4l-4.2 4.7z"/></g><rect x="1467.85" y="1032.55" width="88.80" height="28.50" fill="#fff" stroke="#abadb3" stroke-width="1.5"/><g transform="translate(1531.20 1031.80)"><rect x="0" y="1.5" width="24.7" height="27" fill="#f0f0f0"/><rect x="2.1" y="3.1" width="20.6" height="10.4" fill="#f0f0f0" stroke="#b9b9b9"/><path d="M2.1 13.5V3.1H22.7" fill="none" stroke="#dedede"/><rect x="2.1" y="16.7" width="20.6" height="10.2" fill="#f0f0f0" stroke="#b9b9b9"/><path d="M2.1 26.9V16.7H22.7" fill="none" stroke="#dedede"/><path d="M8.2 10.4h8.4l-4.2-4.7z"/><path d="M8.2 19.2h8.4l-4.2 4.7z"/></g><rect x="902.75" y="1092.75" width="127.50" height="29.50" fill="url(#cg)" stroke="#a7a7a7" stroke-width="1.5"/><path d="M1014.40 1105.30 l4.6 5.8 l4.6 -5.8" fill="none" stroke="#4a4a4a" stroke-width="2.7"/><rect x="1044.85" y="1092.75" width="106.10" height="28.50" fill="#fff" stroke="#abadb3" stroke-width="1.5"/><g transform="translate(1125.50 1092.00)"><rect x="0" y="1.5" width="24.7" height="27" fill="#f0f0f0"/><rect x="2.1" y="3.1" width="20.6" height="10.4" fill="#f0f0f0" stroke="#b9b9b9"/><path d="M2.1 13.5V3.1H22.7" fill="none" stroke="#dedede"/><rect x="2.1" y="16.7" width="20.6" height="10.2" fill="#f0f0f0" stroke="#b9b9b9"/><path d="M2.1 26.9V16.7H22.7" fill="none" stroke="#dedede"/><path d="M8.2 10.4h8.4l-4.2-4.7z"/><path d="M8.2 19.2h8.4l-4.2 4.7z"/></g><rect x="1156.95" y="1092.75" width="106.10" height="29.50" fill="url(#cg)" stroke="#a7a7a7" stroke-width="1.5"/><path d="M1247.20 1105.30 l4.6 5.8 l4.6 -5.8" fill="none" stroke="#4a4a4a" stroke-width="2.7"/><rect x="1269.45" y="1092.75" width="84.30" height="28.50" fill="#fff" stroke="#abadb3" stroke-width="1.5"/><g transform="translate(1328.30 1092.00)"><rect x="0" y="1.5" width="24.7" height="27" fill="#f0f0f0"/><rect x="2.1" y="3.1" width="20.6" height="10.4" fill="#f0f0f0" stroke="#b9b9b9"/><path d="M2.1 13.5V3.1H22.7" fill="none" stroke="#dedede"/><rect x="2.1" y="16.7" width="20.6" height="10.2" fill="#f0f0f0" stroke="#b9b9b9"/><path d="M2.1 26.9V16.7H22.7" fill="none" stroke="#dedede"/><path d="M8.2 10.4h8.4l-4.2-4.7z"/><path d="M8.2 19.2h8.4l-4.2 4.7z"/></g><rect x="1486.45" y="1094.25" width="102.80" height="30.70" fill="#efefef" stroke="#d9d9d9" stroke-width="1.5"/></svg><span class="t " style="left:190.00px;top:737.96px;font-size:16.00px;color:#000;letter-spacing:0.033px;">Anzeige</span><span class="t " style="left:194.70px;top:765.26px;font-size:16.00px;color:#000;letter-spacing:-0.248px;">Links: Lautsprecher, Filter, Summe</span><span class="t " style="left:569.20px;top:737.96px;font-size:16.00px;color:#000;letter-spacing:0.540px;">Offset</span><span class="t " style="left:581.90px;top:764.46px;font-size:16.00px;color:#000;letter-spacing:-0.280px;">3.0</span><span class="t " style="left:668.40px;top:737.96px;font-size:16.00px;color:#000;letter-spacing:-0.580px;">Smooth</span><span class="t " style="left:673.50px;top:765.26px;font-size:16.00px;color:#000;letter-spacing:-0.280px;">1/48</span><span class="t " style="left:793.05px;top:765.06px;font-size:16.00px;color:#000;letter-spacing:-0.114px;">Anzeigen</span><span class="t " style="left:193.10px;top:797.76px;font-size:16.00px;color:#000;letter-spacing:-0.300px;">Filter</span><span class="t " style="left:357.30px;top:797.76px;font-size:16.00px;color:#000;letter-spacing:0.217px;">Fc (Hz)</span><span class="t " style="left:461.70px;top:797.76px;font-size:16.00px;color:#000;letter-spacing:0.000px;">Qc</span><span class="t " style="left:556.30px;top:797.76px;font-size:16.00px;color:#000;letter-spacing:-0.356px;">Pegel (dB)</span><span class="t " style="left:650.50px;top:797.76px;font-size:16.00px;color:#000;letter-spacing:0.050px;">Fp (Hz)</span><span class="t " style="left:754.80px;top:797.76px;font-size:16.00px;color:#000;letter-spacing:-0.600px;">Qp</span><span class="t " style="left:202.40px;top:827.96px;font-size:16.00px;color:#000;letter-spacing:0.000px;">1</span><span class="t " style="left:224.70px;top:828.46px;font-size:16.00px;color:#000;letter-spacing:-0.257px;">HochPass</span><span class="t " style="left:379.05px;top:827.26px;font-size:16.00px;color:#000;letter-spacing:-0.280px;">240.0</span><span class="t " style="left:474.20px;top:827.26px;font-size:16.00px;color:#000;letter-spacing:-0.280px;">1.560</span><span class="t " style="left:569.40px;top:827.26px;font-size:16.00px;color:#000;letter-spacing:-0.280px;">0.0</span><span class="t " style="left:202.20px;top:863.76px;font-size:16.00px;color:#000;letter-spacing:0.000px;">2</span><span class="t " style="left:224.70px;top:864.26px;font-size:16.00px;color:#000;letter-spacing:-0.400px;">HöhenRegler</span><span class="t " style="left:374.75px;top:863.06px;font-size:16.00px;color:#000;letter-spacing:-0.280px;">9000.0</span><span class="t " style="left:474.80px;top:863.06px;font-size:16.00px;color:#000;letter-spacing:-0.280px;">0.300</span><span class="t " style="left:564.30px;top:863.06px;font-size:16.00px;color:#000;letter-spacing:-0.280px;">-1.0</span><span class="t " style="left:202.40px;top:898.46px;font-size:16.00px;color:#000;letter-spacing:0.000px;">3</span><span class="t " style="left:224.70px;top:898.96px;font-size:16.00px;color:#000;letter-spacing:-0.288px;">Equalizer</span><span class="t " style="left:379.05px;top:897.76px;font-size:16.00px;color:#000;letter-spacing:-0.280px;">439.0</span><span class="t " style="left:474.60px;top:897.76px;font-size:16.00px;color:#000;letter-spacing:-0.280px;">2.400</span><span class="t " style="left:569.20px;top:897.76px;font-size:16.00px;color:#000;letter-spacing:-0.280px;">6.5</span><span class="t " style="left:202.70px;top:934.36px;font-size:16.00px;color:#000;letter-spacing:0.000px;">4</span><span class="t " style="left:224.70px;top:934.86px;font-size:16.00px;color:#000;letter-spacing:-0.037px;">unbenutzt</span><span class="t " style="left:202.40px;top:969.06px;font-size:16.00px;color:#000;letter-spacing:0.000px;">5</span><span class="t " style="left:224.70px;top:969.56px;font-size:16.00px;color:#000;letter-spacing:-0.037px;">unbenutzt</span><span class="t " style="left:202.20px;top:1004.76px;font-size:16.00px;color:#000;letter-spacing:0.000px;">6</span><span class="t " style="left:224.70px;top:1005.26px;font-size:16.00px;color:#000;letter-spacing:-0.037px;">unbenutzt</span><span class="t " style="left:202.20px;top:1039.56px;font-size:16.00px;color:#000;letter-spacing:0.000px;">7</span><span class="t " style="left:224.70px;top:1040.06px;font-size:16.00px;color:#000;letter-spacing:-0.037px;">unbenutzt</span><div class="" style="position:absolute;left:854.20px;top:820.00px;width:1.20px;height:242.00px;background:#fbfbfb;"></div><div class="" style="position:absolute;left:856.00px;top:844.60px;width:21.00px;height:24.00px;background:#cdcdcd;"></div><svg style="position:absolute;left:858.4px;top:826px" width="16" height="14" viewBox="0 0 16 14"><path d="M2.4 10.4 L8 3.6 L13.6 10.4" fill="none" stroke="#606060" stroke-width="2.5"/></svg><svg style="position:absolute;left:858.4px;top:1042px" width="16" height="14" viewBox="0 0 16 14"><path d="M2.4 3.6 L8 10.4 L13.6 3.6" fill="none" stroke="#606060" stroke-width="2.5"/></svg><span class="t " style="left:189.10px;top:1071.46px;font-size:16.00px;color:#000;letter-spacing:-0.500px;">Eingang</span><span class="t " style="left:194.70px;top:1100.26px;font-size:16.00px;color:#000;letter-spacing:-0.100px;">Links</span><span class="t " style="left:331.30px;top:1071.46px;font-size:16.00px;color:#000;letter-spacing:-0.113px;">Delay(ms)</span><span class="t " style="left:345.00px;top:1099.06px;font-size:16.00px;color:#000;letter-spacing:-0.280px;">0.00</span><span class="t " style="left:443.70px;top:1071.46px;font-size:16.00px;color:#000;letter-spacing:-0.375px;">Phase</span><span class="t " style="left:448.90px;top:1100.26px;font-size:16.00px;color:#000;letter-spacing:-0.460px;">Normal</span><span class="t " style="left:556.00px;top:1071.46px;font-size:16.00px;color:#000;letter-spacing:-0.312px;">Pegel(dB)</span><span class="t " style="left:569.10px;top:1099.06px;font-size:16.00px;color:#000;letter-spacing:-0.280px;">0.0</span><span class="t " style="left:902.00px;top:737.96px;font-size:16.00px;color:#000;letter-spacing:0.033px;">Anzeige</span><span class="t " style="left:906.70px;top:765.26px;font-size:16.00px;color:#000;letter-spacing:-0.244px;">Rechts: Lautsprecher, Filter, Summe</span><span class="t " style="left:1281.20px;top:737.96px;font-size:16.00px;color:#000;letter-spacing:0.540px;">Offset</span><span class="t " style="left:1294.20px;top:764.46px;font-size:16.00px;color:#000;letter-spacing:-0.280px;">4.0</span><span class="t " style="left:1380.40px;top:737.96px;font-size:16.00px;color:#000;letter-spacing:-0.580px;">Smooth</span><span class="t " style="left:1385.50px;top:765.26px;font-size:16.00px;color:#000;letter-spacing:-0.280px;">1/48</span><span class="t " style="left:1505.05px;top:765.06px;font-size:16.00px;color:#000;letter-spacing:-0.114px;">Anzeigen</span><span class="t " style="left:905.10px;top:797.76px;font-size:16.00px;color:#000;letter-spacing:-0.300px;">Filter</span><span class="t " style="left:1069.30px;top:797.76px;font-size:16.00px;color:#000;letter-spacing:0.217px;">Fc (Hz)</span><span class="t " style="left:1173.70px;top:797.76px;font-size:16.00px;color:#000;letter-spacing:0.000px;">Qc</span><span class="t " style="left:1268.30px;top:797.76px;font-size:16.00px;color:#000;letter-spacing:-0.356px;">Pegel (dB)</span><span class="t " style="left:1362.50px;top:797.76px;font-size:16.00px;color:#000;letter-spacing:0.050px;">Fp (Hz)</span><span class="t " style="left:1466.80px;top:797.76px;font-size:16.00px;color:#000;letter-spacing:-0.600px;">Qp</span><span class="t " style="left:914.40px;top:827.96px;font-size:16.00px;color:#000;letter-spacing:0.000px;">1</span><span class="t " style="left:936.70px;top:828.46px;font-size:16.00px;color:#000;letter-spacing:-0.257px;">HochPass</span><span class="t " style="left:1091.05px;top:827.26px;font-size:16.00px;color:#000;letter-spacing:-0.280px;">240.0</span><span class="t " style="left:1186.20px;top:827.26px;font-size:16.00px;color:#000;letter-spacing:-0.280px;">1.400</span><span class="t " style="left:1281.20px;top:827.26px;font-size:16.00px;color:#000;letter-spacing:-0.280px;">2.2</span><span class="t " style="left:914.20px;top:863.76px;font-size:16.00px;color:#000;letter-spacing:0.000px;">2</span><span class="t " style="left:936.70px;top:864.26px;font-size:16.00px;color:#000;letter-spacing:-0.400px;">HöhenRegler</span><span class="t " style="left:1086.75px;top:863.06px;font-size:16.00px;color:#000;letter-spacing:-0.280px;">9000.0</span><span class="t " style="left:1186.80px;top:863.06px;font-size:16.00px;color:#000;letter-spacing:-0.280px;">0.300</span><span class="t " style="left:1276.30px;top:863.06px;font-size:16.00px;color:#000;letter-spacing:-0.280px;">-1.6</span><span class="t " style="left:914.40px;top:898.46px;font-size:16.00px;color:#000;letter-spacing:0.000px;">3</span><span class="t " style="left:936.70px;top:898.96px;font-size:16.00px;color:#000;letter-spacing:-0.288px;">Equalizer</span><span class="t " style="left:1091.05px;top:897.76px;font-size:16.00px;color:#000;letter-spacing:-0.280px;">400.0</span><span class="t " style="left:1186.60px;top:897.76px;font-size:16.00px;color:#000;letter-spacing:-0.280px;">2.400</span><span class="t " style="left:1281.20px;top:897.76px;font-size:16.00px;color:#000;letter-spacing:-0.280px;">6.0</span><span class="t " style="left:914.70px;top:934.36px;font-size:16.00px;color:#000;letter-spacing:0.000px;">4</span><span class="t " style="left:936.70px;top:934.86px;font-size:16.00px;color:#000;letter-spacing:-0.288px;">Equalizer</span><span class="t " style="left:1086.75px;top:933.66px;font-size:16.00px;color:#000;letter-spacing:-0.280px;">7200.0</span><span class="t " style="left:1186.60px;top:933.66px;font-size:16.00px;color:#000;letter-spacing:-0.280px;">2.000</span><span class="t " style="left:1276.30px;top:933.66px;font-size:16.00px;color:#000;letter-spacing:-0.280px;">-2.0</span><span class="t " style="left:914.40px;top:969.06px;font-size:16.00px;color:#000;letter-spacing:0.000px;">5</span><span class="t " style="left:936.70px;top:969.56px;font-size:16.00px;color:#000;letter-spacing:-0.288px;">Equalizer</span><span class="t " style="left:1082.45px;top:968.36px;font-size:16.00px;color:#000;letter-spacing:-0.280px;">14000.0</span><span class="t " style="left:1186.60px;top:968.36px;font-size:16.00px;color:#000;letter-spacing:-0.280px;">2.000</span><span class="t " style="left:1276.30px;top:968.36px;font-size:16.00px;color:#000;letter-spacing:-0.280px;">-1.5</span><span class="t " style="left:914.20px;top:1004.76px;font-size:16.00px;color:#000;letter-spacing:0.000px;">6</span><span class="t " style="left:936.70px;top:1005.26px;font-size:16.00px;color:#000;letter-spacing:-0.037px;">unbenutzt</span><span class="t " style="left:914.20px;top:1039.56px;font-size:16.00px;color:#000;letter-spacing:0.000px;">7</span><span class="t " style="left:936.70px;top:1040.06px;font-size:16.00px;color:#000;letter-spacing:-0.037px;">unbenutzt</span><div class="" style="position:absolute;left:1566.20px;top:820.00px;width:1.20px;height:242.00px;background:#fbfbfb;"></div><div class="" style="position:absolute;left:1568.00px;top:844.60px;width:21.00px;height:24.00px;background:#cdcdcd;"></div><svg style="position:absolute;left:1570.4px;top:826px" width="16" height="14" viewBox="0 0 16 14"><path d="M2.4 10.4 L8 3.6 L13.6 10.4" fill="none" stroke="#606060" stroke-width="2.5"/></svg><svg style="position:absolute;left:1570.4px;top:1042px" width="16" height="14" viewBox="0 0 16 14"><path d="M2.4 3.6 L8 10.4 L13.6 3.6" fill="none" stroke="#606060" stroke-width="2.5"/></svg><span class="t " style="left:901.10px;top:1071.46px;font-size:16.00px;color:#000;letter-spacing:-0.500px;">Eingang</span><span class="t " style="left:906.70px;top:1100.26px;font-size:16.00px;color:#000;letter-spacing:-0.200px;">Rechts</span><span class="t " style="left:1043.30px;top:1071.46px;font-size:16.00px;color:#000;letter-spacing:-0.113px;">Delay(ms)</span><span class="t " style="left:1057.00px;top:1099.06px;font-size:16.00px;color:#000;letter-spacing:-0.280px;">0.00</span><span class="t " style="left:1155.70px;top:1071.46px;font-size:16.00px;color:#000;letter-spacing:-0.375px;">Phase</span><span class="t " style="left:1160.90px;top:1100.26px;font-size:16.00px;color:#000;letter-spacing:-0.460px;">Normal</span><span class="t " style="left:1268.00px;top:1071.46px;font-size:16.00px;color:#000;letter-spacing:-0.312px;">Pegel(dB)</span><span class="t " style="left:1281.10px;top:1099.06px;font-size:16.00px;color:#000;letter-spacing:-0.280px;">0.0</span><span class="t " style="left:1510.20px;top:1101.66px;font-size:16.00px;color:#838383;letter-spacing:-0.200px;">Senden</span><div class="" style="position:absolute;left:179.40px;top:1149.20px;width:1422.80px;height:1.40px;background:#fff;"></div><div class="" style="position:absolute;left:264.60px;top:1152.60px;width:1.20px;height:28.00px;background:#d7d7d7;"></div><div class="" style="position:absolute;left:350.80px;top:1152.60px;width:1.20px;height:28.00px;background:#d7d7d7;"></div><div class="" style="position:absolute;left:393.90px;top:1152.60px;width:1.20px;height:28.00px;background:#d7d7d7;"></div><div class="" style="position:absolute;left:437.00px;top:1152.60px;width:1.20px;height:28.00px;background:#d7d7d7;"></div><div class="" style="position:absolute;left:523.30px;top:1152.60px;width:1.20px;height:28.00px;background:#d7d7d7;"></div><div class="" style="position:absolute;left:1456.70px;top:1152.60px;width:1.20px;height:28.00px;background:#d7d7d7;"></div><span class="t " style="left:182.60px;top:1160.01px;font-size:17.00px;color:#000;transform-origin:0 0;transform:scaleX(0.99);">Fertig</span><span class="t " style="left:272.40px;top:1160.01px;font-size:17.00px;color:#000;transform-origin:0 0;transform:scaleX(0.96);">COM1</span><span class="t " style="left:444.00px;top:1160.01px;font-size:17.00px;color:#000;transform-origin:0 0;transform:scaleX(0.91);">96000</span><svg style="position:absolute;left:359px;top:1158px" width="24" height="18" viewBox="0 0 24 18"><rect x="1.2" y="2.2" width="8" height="8.4" fill="#111"/><rect x="10.4" y="6.6" width="10.4" height="8.6" fill="#111"/><rect x="2" y="0.6" width="1.6" height="2" fill="#111"/><rect x="6" y="0.6" width="1.6" height="2" fill="#111"/><rect x="4" y="10.6" width="2" height="2" fill="#111"/><rect x="12" y="5" width="1.8" height="2" fill="#111"/><rect x="16.6" y="5" width="1.8" height="2" fill="#111"/></svg></body></html>
